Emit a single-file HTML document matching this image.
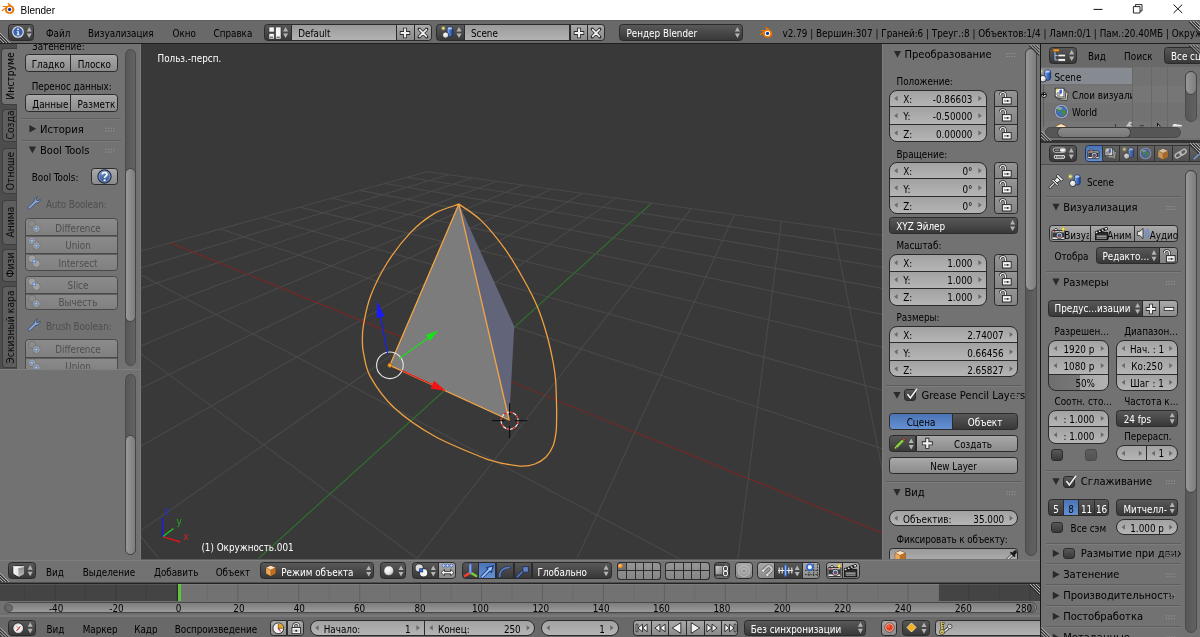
<!DOCTYPE html>
<html lang="ru"><head><meta charset="utf-8"><title>Blender</title>
<style>
html,body{margin:0;padding:0}
body{width:1200px;height:637px;position:relative;overflow:hidden;background:#727272;will-change:transform;
 font-family:"DejaVu Sans Condensed","DejaVu Sans","Liberation Sans",sans-serif;font-stretch:condensed;font-size:9.8px;color:#000}
.a{position:absolute;box-sizing:border-box}
.t{position:absolute;white-space:nowrap;height:14px;line-height:14px}
.w{border:1px solid #2b2b2b;border-radius:3.5px}
.tool{background:linear-gradient(#a9a9a9,#8b8b8b)}
.num{background:linear-gradient(#a2a2a2,#b5b5b5)}
.menu{background:linear-gradient(#585858,#383838);color:#fff}
.radio{background:linear-gradient(#575757,#383838);color:#fff}
.sel{background:linear-gradient(#4a74b6,#6590d2);color:#fff}
.txtf{background:linear-gradient(#9a9a9a,#b3b3b3)}
.dis{opacity:.5}
.c{text-align:center}
.wh{color:#fff}
.hd{font-size:11.1px;margin-top:.3px}
svg{position:absolute;overflow:visible}
</style></head>
<body>
<!-- viewport -->
<div class="a " style="left:141px;top:44px;width:741px;height:514.5px;background:#393939"></div><svg class="a" style="left:0;top:0" width="1200" height="637"><defs><clipPath id="vp"><rect x="141" y="44" width="741" height="514.5"/></clipPath></defs><g clip-path="url(#vp)"><line x1="-1207.0" y1="624.8" x2="427.1" y2="171.7" stroke="#494949" stroke-width="1.1"/><line x1="-1207.0" y1="624.8" x2="-9213.0" y2="5083.0" stroke="#494949" stroke-width="1.1"/><line x1="-1409.1" y1="737.4" x2="448.7" y2="174.7" stroke="#494949" stroke-width="1.1"/><line x1="-776.3" y1="505.4" x2="-6630.6" y2="5052.9" stroke="#494949" stroke-width="1.1"/><line x1="-1716.4" y1="908.5" x2="471.8" y2="178.0" stroke="#494949" stroke-width="1.1"/><line x1="-497.7" y1="428.2" x2="-4048.2" y2="5022.8" stroke="#494949" stroke-width="1.1"/><line x1="-2240.1" y1="1200.1" x2="496.5" y2="181.4" stroke="#494949" stroke-width="1.1"/><line x1="-302.7" y1="374.1" x2="-1465.8" y2="4992.7" stroke="#494949" stroke-width="1.1"/><line x1="-3332.5" y1="1808.4" x2="523.0" y2="185.1" stroke="#494949" stroke-width="1.1"/><line x1="-158.6" y1="334.2" x2="1116.7" y2="4962.6" stroke="#494949" stroke-width="1.1"/><line x1="-7022.3" y1="3863.1" x2="551.5" y2="189.1" stroke="#494949" stroke-width="1.1"/><line x1="-47.8" y1="303.4" x2="3699.1" y2="4932.4" stroke="#494949" stroke-width="1.1"/><line x1="-7926.0" y1="5068.0" x2="582.3" y2="193.4" stroke="#494949" stroke-width="1.1"/><line x1="40.0" y1="279.1" x2="6281.5" y2="4902.3" stroke="#494949" stroke-width="1.1"/><line x1="-6307.0" y1="5049.1" x2="615.6" y2="198.1" stroke="#494949" stroke-width="1.1"/><line x1="111.4" y1="259.3" x2="5518.2" y2="3108.9" stroke="#494949" stroke-width="1.1"/><line x1="-4688.0" y1="5030.2" x2="651.7" y2="203.1" stroke="#2d742d" stroke-width="1.1"/><line x1="170.6" y1="242.9" x2="2626.0" y2="1244.4" stroke="#7a2626" stroke-width="1.1"/><line x1="-3068.9" y1="5011.4" x2="691.1" y2="208.6" stroke="#494949" stroke-width="1.1"/><line x1="220.4" y1="229.1" x2="1932.4" y2="797.3" stroke="#494949" stroke-width="1.1"/><line x1="-1449.9" y1="4992.5" x2="734.2" y2="214.7" stroke="#494949" stroke-width="1.1"/><line x1="262.9" y1="217.3" x2="1620.9" y2="596.4" stroke="#494949" stroke-width="1.1"/><line x1="169.1" y1="4973.6" x2="781.4" y2="221.3" stroke="#494949" stroke-width="1.1"/><line x1="299.6" y1="207.1" x2="1443.9" y2="482.3" stroke="#494949" stroke-width="1.1"/><line x1="1788.2" y1="4954.7" x2="833.6" y2="228.6" stroke="#494949" stroke-width="1.1"/><line x1="331.6" y1="198.2" x2="1329.7" y2="408.8" stroke="#494949" stroke-width="1.1"/><line x1="3407.2" y1="4935.8" x2="891.5" y2="236.6" stroke="#494949" stroke-width="1.1"/><line x1="359.8" y1="190.4" x2="1250.0" y2="357.4" stroke="#494949" stroke-width="1.1"/><line x1="5026.3" y1="4917.0" x2="956.0" y2="245.7" stroke="#494949" stroke-width="1.1"/><line x1="384.8" y1="183.5" x2="1191.2" y2="319.4" stroke="#494949" stroke-width="1.1"/><line x1="6645.3" y1="4898.1" x2="1028.4" y2="255.8" stroke="#494949" stroke-width="1.1"/><line x1="407.1" y1="177.3" x2="1146.0" y2="290.3" stroke="#494949" stroke-width="1.1"/><line x1="8264.3" y1="4879.2" x2="1110.2" y2="267.2" stroke="#494949" stroke-width="1.1"/><line x1="427.1" y1="171.7" x2="1110.2" y2="267.2" stroke="#494949" stroke-width="1.1"/><polygon points="458.9,204.1 389.9,365.3 509.1,420" fill="#7c7c7c"/><polygon points="458.9,204.1 514.3,326.6 509.3,417 509.1,420" fill="#62647a"/><path d="M458.9 204.1 C454.8 205.7 442.2 208.9 434.2 213.6 C426.2 218.3 418.5 224.2 410.7 232.4 C402.9 240.6 393.8 252.4 387.1 263.0 C380.4 273.6 374.5 285.8 370.6 296.0 C366.7 306.2 365.0 316.9 363.6 324.2 C362.2 331.5 362.4 335.1 362.4 340.0 C362.4 344.9 362.2 347.4 363.6 353.6 C365.0 359.8 365.5 368.1 370.6 377.1 C375.7 386.1 383.6 397.9 394.2 407.7 C404.8 417.5 419.9 427.9 434.2 436.0 C448.5 444.1 470.3 452.4 480.0 456.5 C489.7 460.6 488.2 459.5 492.6 460.8 C497.1 462.1 501.7 463.3 506.7 464.2 C511.7 465.1 517.7 466.2 522.4 466.2 C527.1 466.2 531.1 465.5 535.0 464.0 C538.9 462.5 543.0 460.0 546.0 457.0 C549.0 454.0 551.3 450.2 553.0 446.0 C554.7 441.8 555.5 436.3 556.1 431.8 C556.7 427.3 556.5 423.9 556.6 419.2 C556.7 414.5 556.7 410.0 556.5 403.5 C556.3 397.0 556.2 386.9 555.6 380.0 C555.0 373.1 554.5 369.2 553.1 362.0 C551.7 354.8 549.8 345.5 547.3 336.5 C544.8 327.5 541.7 317.3 537.8 307.8 C533.9 298.3 529.2 289.3 523.7 279.5 C518.2 269.7 512.0 258.7 504.9 248.9 C497.8 239.1 489.0 228.1 481.3 220.6 C473.6 213.1 462.6 206.8 458.9 204.1" fill="none" stroke="#efa040" stroke-width="1.3"/><path d="M389.9 365.3 L458.9 204.1 L509.1 420 Z" fill="none" stroke="#f2a648" stroke-width="1.3" stroke-linejoin="round"/><circle cx="389.9" cy="365.3" r="13.3" fill="none" stroke="#e6e6e6" stroke-width="1.1"/><line x1="387.5" y1="353.3" x2="380.6" y2="317.2" stroke="#1a1aff" stroke-width="1.1"/><polygon points="377.3,301.5 384.5,316.4 376.7,318.0" fill="#1a1aff"/><line x1="399.2" y1="358.8" x2="427.8" y2="338" stroke="#19e019" stroke-width="1.1"/><polygon points="438.5,330.2 429.9,340.9 425.7,335.1" fill="#19e019"/><line x1="401.7" y1="370.6" x2="432.3" y2="384.6" stroke="#f01414" stroke-width="1.1"/><polygon points="446.0,391.0 430.5,388.4 434.1,380.8" fill="#f01414"/><circle cx="389.9" cy="365.3" r="2.2" fill="#f0a030" stroke="#7a4a10" stroke-width=".6"/><circle cx="509.6" cy="420.7" r="8.6" fill="none" stroke="#f2f2f2" stroke-width="1.2"/><circle cx="509.6" cy="420.7" r="8.6" fill="none" stroke="#d01818" stroke-width="1.2" stroke-dasharray="3.4 3.4"/><path d="M492.1 420.7H504.6 M515.1 420.7H527.1 M509.6 403.2V415.2 M509.6 426.2V438.2" stroke="#0a0a0a" stroke-width="1"/><line x1="162.5" y1="536.7" x2="180.4" y2="542" stroke="#e01616" stroke-width="1.4"/><line x1="162.5" y1="536.7" x2="173.5" y2="528.5" stroke="#1cc81c" stroke-width="1.4"/><line x1="162.5" y1="536.7" x2="162.5" y2="517.8" stroke="#1a1af0" stroke-width="1.4"/></g></svg><div class="t" style="left:183.4px;top:529.5px;color:#cc2424;font-size:10px">x</div><div class="t" style="left:176.4px;top:514.5px;color:#22aa22;font-size:10px">y</div><div class="t" style="left:164.3px;top:504.8px;color:#2828e8;font-size:10px">z</div><div class="t wh" style="left:157.5px;top:52.4px;">Польз.-персп.</div><div class="t wh" style="left:201.4px;top:541px;">(1) Окружность.001</div>
<!-- toolshelf -->
<div class="a " style="left:0px;top:44px;width:140px;height:325px;background:#727272;overflow:hidden"></div><div class="a " style="left:0px;top:44px;width:16.6px;height:325px;background:#4d4d4d"></div><div class="a " style="left:16px;top:44px;width:1px;height:325px;background:#444"></div><div class="a " style="left:1.2px;top:47.5px;width:15.4px;height:57px;background:#727272;border:1px solid #3e3e3e;border-right:0;border-radius:4px 0 0 4px;overflow:hidden"></div><div class="a" style="left:1.2px;top:47.5px;width:15.400000000000002px;height:57.0px;overflow:hidden"><div class="t" style="left:8.6px;top:28.5px;transform:translate(-50%,-50%) rotate(-90deg);color:#000;font-size:10.3px">Инструме</div></div><div class="a " style="left:2.2px;top:108.5px;width:14.4px;height:33.5px;background:#5e5e5e;border:1px solid #3e3e3e;border-right:1px solid #444;border-radius:4px 0 0 4px;overflow:hidden"></div><div class="a" style="left:2.2px;top:108.5px;width:14.400000000000002px;height:33.5px;overflow:hidden"><div class="t" style="left:8.1px;top:16.75px;transform:translate(-50%,-50%) rotate(-90deg);color:#0c0c0c;font-size:10.3px">Созда</div></div><div class="a " style="left:2.2px;top:148px;width:14.4px;height:46px;background:#5e5e5e;border:1px solid #3e3e3e;border-right:1px solid #444;border-radius:4px 0 0 4px;overflow:hidden"></div><div class="a" style="left:2.2px;top:148px;width:14.400000000000002px;height:46px;overflow:hidden"><div class="t" style="left:8.1px;top:23px;transform:translate(-50%,-50%) rotate(-90deg);color:#0c0c0c;font-size:10.3px">Отноше</div></div><div class="a " style="left:2.2px;top:200px;width:14.4px;height:44.5px;background:#5e5e5e;border:1px solid #3e3e3e;border-right:1px solid #444;border-radius:4px 0 0 4px;overflow:hidden"></div><div class="a" style="left:2.2px;top:200px;width:14.400000000000002px;height:44.5px;overflow:hidden"><div class="t" style="left:8.1px;top:22.25px;transform:translate(-50%,-50%) rotate(-90deg);color:#0c0c0c;font-size:10.3px">Анима</div></div><div class="a " style="left:2.2px;top:248.5px;width:14.4px;height:33.5px;background:#5e5e5e;border:1px solid #3e3e3e;border-right:1px solid #444;border-radius:4px 0 0 4px;overflow:hidden"></div><div class="a" style="left:2.2px;top:248.5px;width:14.400000000000002px;height:33.5px;overflow:hidden"><div class="t" style="left:8.1px;top:16.75px;transform:translate(-50%,-50%) rotate(-90deg);color:#0c0c0c;font-size:10.3px">Физи</div></div><div class="a " style="left:2.2px;top:285.5px;width:14.4px;height:82.5px;background:#5e5e5e;border:1px solid #3e3e3e;border-right:1px solid #444;border-radius:4px 0 0 4px;overflow:hidden"></div><div class="a" style="left:2.2px;top:285.5px;width:14.400000000000002px;height:82.5px;overflow:hidden"><div class="t" style="left:8.1px;top:41.25px;transform:translate(-50%,-50%) rotate(-90deg);color:#0c0c0c;font-size:10.3px">Эскизный кара</div></div><div class="a" style="left:18px;top:44px;width:105px;height:12px;overflow:hidden"><div class="t " style="left:14px;top:-4.4px;">Затенение:</div></div><div class="a w tool" style="left:25px;top:54px;width:47px;height:18px;border-radius:3.5px 0 0 3.5px;"></div><div class="t c " style="left:25px;width:46.5px;top:57.7px;">Гладко</div><div class="a w tool" style="left:70px;top:54px;width:48px;height:18px;border-radius:0 3.5px 3.5px 0;"></div><div class="t c " style="left:70.5px;width:47.5px;top:57.7px;">Плоско</div><div class="t " style="left:31.7px;top:79.9px;">Перенос данных:</div><div class="a w tool" style="left:25px;top:94px;width:47px;height:18px;border-radius:3.5px 0 0 3.5px;"></div><div class="a" style="left:26px;top:94px;width:44px;height:17.7px;overflow:hidden"><div class="t " style="left:6.3px;top:3.55px;">Данные</div></div><div class="a w tool" style="left:70px;top:94px;width:48px;height:18px;border-radius:0 3.5px 3.5px 0;"></div><div class="a" style="left:70.5px;top:94px;width:44.6px;height:17.7px;overflow:hidden"><div class="t " style="left:7px;top:3.55px;">Разметка</div></div><div class="a " style="left:22px;top:118px;width:98.5px;height:1px;background:#5e5e5e"></div><div class="a " style="left:22px;top:119px;width:98.5px;height:1px;background:#7c7c7c"></div><svg class="a" style="left:0;top:0" width="1200" height="637"><polygon points="29.4,125.10000000000001 29.4,132.5 36.199999999999996,128.8" fill="#2a2a2a"/></svg><div class="t hd" style="left:40px;top:122.4px;">История</div><svg class="a" style="left:0;top:0" width="1200" height="637"><rect x="105.5" y="127.8" width="1.3" height="1.3" fill="#9a9a9a"/><rect x="106.1" y="128.5" width="1" height="1" fill="#555" opacity=".55"/><rect x="105.5" y="130.6" width="1.3" height="1.3" fill="#9a9a9a"/><rect x="106.1" y="131.3" width="1" height="1" fill="#555" opacity=".55"/><rect x="108.1" y="127.8" width="1.3" height="1.3" fill="#9a9a9a"/><rect x="108.7" y="128.5" width="1" height="1" fill="#555" opacity=".55"/><rect x="108.1" y="130.6" width="1.3" height="1.3" fill="#9a9a9a"/><rect x="108.7" y="131.3" width="1" height="1" fill="#555" opacity=".55"/><rect x="110.7" y="127.8" width="1.3" height="1.3" fill="#9a9a9a"/><rect x="111.3" y="128.5" width="1" height="1" fill="#555" opacity=".55"/><rect x="110.7" y="130.6" width="1.3" height="1.3" fill="#9a9a9a"/><rect x="111.3" y="131.3" width="1" height="1" fill="#555" opacity=".55"/><rect x="113.3" y="127.8" width="1.3" height="1.3" fill="#9a9a9a"/><rect x="113.9" y="128.5" width="1" height="1" fill="#555" opacity=".55"/><rect x="113.3" y="130.6" width="1.3" height="1.3" fill="#9a9a9a"/><rect x="113.9" y="131.3" width="1" height="1" fill="#555" opacity=".55"/></svg><div class="a " style="left:22px;top:139.5px;width:98.5px;height:1px;background:#5e5e5e"></div><div class="a " style="left:22px;top:140.5px;width:98.5px;height:1px;background:#7c7c7c"></div><svg class="a" style="left:0;top:0" width="1200" height="637"><polygon points="28.799999999999997,146.60000000000002 36.0,146.60000000000002 32.4,153.4" fill="#2a2a2a"/></svg><div class="t hd" style="left:40px;top:143.4px;">Bool Tools</div><svg class="a" style="left:0;top:0" width="1200" height="637"><rect x="105.5" y="148.8" width="1.3" height="1.3" fill="#9a9a9a"/><rect x="106.1" y="149.5" width="1" height="1" fill="#555" opacity=".55"/><rect x="105.5" y="151.6" width="1.3" height="1.3" fill="#9a9a9a"/><rect x="106.1" y="152.3" width="1" height="1" fill="#555" opacity=".55"/><rect x="108.1" y="148.8" width="1.3" height="1.3" fill="#9a9a9a"/><rect x="108.7" y="149.5" width="1" height="1" fill="#555" opacity=".55"/><rect x="108.1" y="151.6" width="1.3" height="1.3" fill="#9a9a9a"/><rect x="108.7" y="152.3" width="1" height="1" fill="#555" opacity=".55"/><rect x="110.7" y="148.8" width="1.3" height="1.3" fill="#9a9a9a"/><rect x="111.3" y="149.5" width="1" height="1" fill="#555" opacity=".55"/><rect x="110.7" y="151.6" width="1.3" height="1.3" fill="#9a9a9a"/><rect x="111.3" y="152.3" width="1" height="1" fill="#555" opacity=".55"/><rect x="113.3" y="148.8" width="1.3" height="1.3" fill="#9a9a9a"/><rect x="113.9" y="149.5" width="1" height="1" fill="#555" opacity=".55"/><rect x="113.3" y="151.6" width="1.3" height="1.3" fill="#9a9a9a"/><rect x="113.9" y="152.3" width="1" height="1" fill="#555" opacity=".55"/></svg><div class="t " style="left:31.8px;top:170.9px;">Bool Tools:</div><div class="a w tool" style="left:91px;top:168px;width:27px;height:17px;border-radius:3.5px;"></div><svg class="a" style="left:97.2px;top:169px" width="15" height="15" viewBox="0 0 15 15"><defs><linearGradient id="hlp" x1="0" y1="0" x2="0" y2="1"><stop offset="0" stop-color="#6f8fc6"/><stop offset="1" stop-color="#37578f"/></linearGradient></defs><circle cx="7.5" cy="7.5" r="6.6" fill="url(#hlp)" stroke="#1c2842" stroke-width="1.1"/><circle cx="7.5" cy="7.5" r="5.5" fill="none" stroke="#a9bfe4" stroke-width=".6" opacity=".8"/><path d="M5.3 5.6 C5.3 2.8 9.9 2.8 9.9 5.5 C9.9 7.2 7.6 7.2 7.6 9" stroke="#fff" stroke-width="1.7" fill="none"/><circle cx="7.6" cy="11.3" r="1.05" fill="#fff"/></svg><svg class="a" style="left:27px;top:196px;opacity:1" width="14" height="14" viewBox="0 0 14 14"><path d="M1.3 11.2 L7.6 4.9 C7.2 3.3 7.9 1.8 9.5 1 L10.6 0.8 L8.9 2.9 L9.6 4.4 L11.2 5 L13 3.1 C13.3 4.6 12.6 6.3 11 6.9 C10.2 7.2 9.6 7.1 9 6.9 L2.8 12.8 C1.8 13.6 0.4 12.2 1.3 11.2Z" fill="#8fb0de" stroke="#33466a" stroke-width=".8"/></svg><div class="t " style="left:45.9px;top:198.1px;color:#4e4e4e;letter-spacing:-.09px">Auto Boolean:</div><div class="a w" style="left:25px;top:218px;width:93px;height:18px;border-radius:3.5px 3.5px 0 0;background:linear-gradient(#8b8b8b,#808080);border-color:#4a4a4a"></div><svg class="a" style="left:26.5px;top:219.3px;opacity:0.85" width="15" height="15" viewBox="0 0 15 15"><circle cx="5" cy="4.8" r="3.8" fill="#8c8c8c" stroke="#6c6c6c" stroke-width=".7"/><circle cx="9.4" cy="9.6" r="3.8" fill="#a8a8a8" stroke="#686868" stroke-width=".7"/><rect x="8" y="8.3" width="2.8" height="2.6" fill="#d4def0" stroke="#5b86cc" stroke-width=".9"/></svg><div class="t c" style="left:41px;width:74px;top:221.5px;color:#4e4e4e">Difference</div><div class="a w" style="left:25px;top:235px;width:93px;height:19px;border-radius:0;background:linear-gradient(#8b8b8b,#808080);border-color:#4a4a4a"></div><div class="a " style="left:26px;top:236px;width:91px;height:1px;background:rgba(60,60,60,.55)"></div><svg class="a" style="left:26.5px;top:236.3px;opacity:0.85" width="15" height="15" viewBox="0 0 15 15"><circle cx="5" cy="4.8" r="3.8" fill="#a6a6a6" stroke="#6c6c6c" stroke-width=".7"/><circle cx="9.4" cy="9.6" r="3.8" fill="#a8a8a8" stroke="#686868" stroke-width=".7"/><rect x="3.6" y="3.5" width="2.6" height="2.5" fill="#d4def0" stroke="#5b86cc" stroke-width=".9"/><rect x="8" y="8.3" width="2.8" height="2.6" fill="#d4def0" stroke="#5b86cc" stroke-width=".9"/></svg><div class="t c" style="left:41px;width:74px;top:238.75px;color:#4e4e4e">Union</div><div class="a w" style="left:25px;top:253px;width:93px;height:18px;border-radius:0 0 3.5px 3.5px;background:linear-gradient(#8b8b8b,#808080);border-color:#4a4a4a"></div><div class="a " style="left:26px;top:254px;width:91px;height:1px;background:rgba(60,60,60,.55)"></div><svg class="a" style="left:26.5px;top:253.8px;opacity:0.85" width="15" height="15" viewBox="0 0 15 15"><circle cx="5" cy="4.8" r="3.8" fill="#a6a6a6" stroke="#6c6c6c" stroke-width=".7"/><circle cx="9.4" cy="9.6" r="3.8" fill="#a8a8a8" stroke="#686868" stroke-width=".7"/><rect x="5.8" y="6" width="2.7" height="2.6" fill="#d4def0" stroke="#5b86cc" stroke-width=".9"/></svg><div class="t c" style="left:41px;width:74px;top:256.6px;color:#4e4e4e">Intersect</div><div class="a w" style="left:25px;top:276px;width:93px;height:18px;border-radius:3.5px 3.5px 0 0;background:linear-gradient(#8b8b8b,#808080);border-color:#4a4a4a"></div><svg class="a" style="left:26.5px;top:276.7px;opacity:0.85" width="15" height="15" viewBox="0 0 15 15"><circle cx="5" cy="4.8" r="3.8" fill="#a6a6a6" stroke="#6c6c6c" stroke-width=".7"/><circle cx="9.4" cy="9.6" r="3.8" fill="#a8a8a8" stroke="#686868" stroke-width=".7"/><rect x="5.8" y="6" width="2.7" height="2.6" fill="#d4def0" stroke="#5b86cc" stroke-width=".9"/></svg><div class="t c" style="left:41px;width:74px;top:279.05px;color:#4e4e4e">Slice</div><div class="a w" style="left:25px;top:293px;width:93px;height:17px;border-radius:0 0 3.5px 3.5px;background:linear-gradient(#8b8b8b,#808080);border-color:#4a4a4a"></div><div class="a " style="left:26px;top:294px;width:91px;height:1px;background:rgba(60,60,60,.55)"></div><svg class="a" style="left:26.5px;top:294px;opacity:0.85" width="15" height="15" viewBox="0 0 15 15"><circle cx="5" cy="4.8" r="3.8" fill="#8c8c8c" stroke="#6c6c6c" stroke-width=".7"/><circle cx="9.4" cy="9.6" r="3.8" fill="#a8a8a8" stroke="#686868" stroke-width=".7"/><rect x="8" y="8.3" width="2.8" height="2.6" fill="#d4def0" stroke="#5b86cc" stroke-width=".9"/></svg><div class="t c" style="left:41px;width:74px;top:296.35px;color:#4e4e4e">Вычесть</div><svg class="a" style="left:27px;top:318px;opacity:1" width="14" height="14" viewBox="0 0 14 14"><path d="M1.3 11.2 L7.6 4.9 C7.2 3.3 7.9 1.8 9.5 1 L10.6 0.8 L8.9 2.9 L9.6 4.4 L11.2 5 L13 3.1 C13.3 4.6 12.6 6.3 11 6.9 C10.2 7.2 9.6 7.1 9 6.9 L2.8 12.8 C1.8 13.6 0.4 12.2 1.3 11.2Z" fill="#8fb0de" stroke="#33466a" stroke-width=".8"/></svg><div class="t " style="left:45.9px;top:319.6px;color:#4e4e4e;letter-spacing:-.09px">Brush Boolean:</div><div class="a" style="left:0;top:339px;width:125px;height:29.5px;overflow:hidden"><div class="a" style="left:0;top:-339px"><div class="a w" style="left:25px;top:339px;width:93px;height:19px;border-radius:3.5px 3.5px 0 0;background:linear-gradient(#8b8b8b,#808080);border-color:#4a4a4a"></div><svg class="a" style="left:26.5px;top:340.4px;opacity:0.85" width="15" height="15" viewBox="0 0 15 15"><circle cx="5" cy="4.8" r="3.8" fill="#8c8c8c" stroke="#6c6c6c" stroke-width=".7"/><circle cx="9.4" cy="9.6" r="3.8" fill="#a8a8a8" stroke="#686868" stroke-width=".7"/><rect x="8" y="8.3" width="2.8" height="2.6" fill="#d4def0" stroke="#5b86cc" stroke-width=".9"/></svg><div class="t c" style="left:41px;width:74px;top:342.8px;color:#4e4e4e">Difference</div><div class="a w" style="left:25px;top:357px;width:93px;height:17px;border-radius:0;background:linear-gradient(#8b8b8b,#808080);border-color:#4a4a4a"></div><div class="a " style="left:26px;top:358px;width:91px;height:1px;background:rgba(60,60,60,.55)"></div><svg class="a" style="left:26.5px;top:357.8px;opacity:0.85" width="15" height="15" viewBox="0 0 15 15"><circle cx="5" cy="4.8" r="3.8" fill="#a6a6a6" stroke="#6c6c6c" stroke-width=".7"/><circle cx="9.4" cy="9.6" r="3.8" fill="#a8a8a8" stroke="#686868" stroke-width=".7"/><rect x="3.6" y="3.5" width="2.6" height="2.5" fill="#d4def0" stroke="#5b86cc" stroke-width=".9"/><rect x="8" y="8.3" width="2.8" height="2.6" fill="#d4def0" stroke="#5b86cc" stroke-width=".9"/></svg><div class="t c" style="left:41px;width:74px;top:359.8px;color:#4e4e4e">Union</div></div></div><div class="a " style="left:124.8px;top:48.5px;width:10.8px;height:317px;background:linear-gradient(90deg,#575757,#626262);border:1px solid #4c4c4c;border-radius:6px"></div><div class="a " style="left:124.8px;top:168px;width:10.8px;height:153.6px;background:linear-gradient(90deg,#989898,#7d7d7d);border:1px solid #444;border-radius:6px"></div><div class="a " style="left:0px;top:369px;width:140px;height:1px;background:#808080"></div><div class="a " style="left:0px;top:369.5px;width:140px;height:189px;background:#727272"></div><div class="a " style="left:124.8px;top:374px;width:10.8px;height:181px;background:linear-gradient(90deg,#575757,#626262);border:1px solid #4c4c4c;border-radius:6px"></div><div class="a " style="left:124.8px;top:434.6px;width:10.8px;height:120.4px;background:linear-gradient(90deg,#989898,#7d7d7d);border:1px solid #444;border-radius:6px"></div><div class="a " style="left:139.6px;top:44px;width:1.2px;height:515px;background:#7c7c7c"></div>
<!-- npanel -->
<div class="a " style="left:882px;top:44px;width:158.5px;height:514.5px;background:#727272"></div><div class="a " style="left:882px;top:44px;width:1px;height:514.5px;background:#7e7e7e"></div><svg class="a" style="left:0;top:0" width="1200" height="637"><polygon points="893.9,51.0 901.1,51.0 897.5,57.800000000000004" fill="#2a2a2a"/></svg><div class="t hd" style="left:904.4px;top:47.8px;">Преобразование</div><svg class="a" style="left:0;top:0" width="1200" height="637"><rect x="1006.6" y="53.3" width="1.3" height="1.3" fill="#9a9a9a"/><rect x="1007.2" y="54.0" width="1" height="1" fill="#555" opacity=".55"/><rect x="1006.6" y="56.1" width="1.3" height="1.3" fill="#9a9a9a"/><rect x="1007.2" y="56.8" width="1" height="1" fill="#555" opacity=".55"/><rect x="1009.2" y="53.3" width="1.3" height="1.3" fill="#9a9a9a"/><rect x="1009.8" y="54.0" width="1" height="1" fill="#555" opacity=".55"/><rect x="1009.2" y="56.1" width="1.3" height="1.3" fill="#9a9a9a"/><rect x="1009.8" y="56.8" width="1" height="1" fill="#555" opacity=".55"/><rect x="1011.8" y="53.3" width="1.3" height="1.3" fill="#9a9a9a"/><rect x="1012.4" y="54.0" width="1" height="1" fill="#555" opacity=".55"/><rect x="1011.8" y="56.1" width="1.3" height="1.3" fill="#9a9a9a"/><rect x="1012.4" y="56.8" width="1" height="1" fill="#555" opacity=".55"/><rect x="1014.4" y="53.3" width="1.3" height="1.3" fill="#9a9a9a"/><rect x="1015.0" y="54.0" width="1" height="1" fill="#555" opacity=".55"/><rect x="1014.4" y="56.1" width="1.3" height="1.3" fill="#9a9a9a"/><rect x="1015.0" y="56.8" width="1" height="1" fill="#555" opacity=".55"/></svg><div class="t " style="left:896.5px;top:75.4px;">Положение:</div><div class="a w num" style="left:889px;top:90px;width:98px;height:17px;border-radius:8px 8px 0 0;"></div><svg class="a" style="left:0;top:0" width="1200" height="637"><polygon points="897.6,95.85000000000001 897.6,101.05 894.2,98.45" fill="#6a6a6a"/><polygon points="978.4,95.85000000000001 978.4,101.05 981.8,98.45" fill="#6a6a6a"/></svg><div class="t" style="left:903.3px;top:93.15px;">X:</div><div class="t" style="right:227.6px;top:93.15px;">-0.86603</div><div class="a w" style="left:994px;top:90px;width:24px;height:17px;border-radius:3.5px 3.5px 0 0;background:linear-gradient(#959595,#848484)"></div><svg class="a" style="left:998.1px;top:91.3px" width="14" height="14" viewBox="0 0 14 14"><path d="M2.2 4.2 C2.2 0.6 7.4 0.6 7.4 4.2 V7.4" fill="none" stroke="#2a2a2a" stroke-width="2.6"/><path d="M2.2 4.2 C2.2 0.6 7.4 0.6 7.4 4.2 V7.4" fill="none" stroke="#f2f2f2" stroke-width="1.2"/><rect x="4.4" y="6.6" width="8.8" height="6.4" fill="#f4f4f4" stroke="#2a2a2a" stroke-width="1"/><rect x="6" y="9" width="5.4" height="1.8" fill="#9a9a9a"/><rect x="9" y="9" width="1.2" height="1.8" fill="#333"/></svg><div class="a w num" style="left:889px;top:106px;width:98px;height:19px;border-radius:0;"></div><svg class="a" style="left:0;top:0" width="1200" height="637"><polygon points="897.6,113.10000000000001 897.6,118.3 894.2,115.7" fill="#6a6a6a"/><polygon points="978.4,113.10000000000001 978.4,118.3 981.8,115.7" fill="#6a6a6a"/></svg><div class="t" style="left:903.3px;top:110.4px;">Y:</div><div class="t" style="right:227.6px;top:110.4px;">-0.50000</div><div class="a w" style="left:994px;top:106px;width:24px;height:19px;border-radius:0;background:linear-gradient(#959595,#848484)"></div><svg class="a" style="left:998.1px;top:107.8px" width="14" height="14" viewBox="0 0 14 14"><path d="M2.2 4.2 C2.2 0.6 7.4 0.6 7.4 4.2 V7.4" fill="none" stroke="#2a2a2a" stroke-width="2.6"/><path d="M2.2 4.2 C2.2 0.6 7.4 0.6 7.4 4.2 V7.4" fill="none" stroke="#f2f2f2" stroke-width="1.2"/><rect x="4.4" y="6.6" width="8.8" height="6.4" fill="#f4f4f4" stroke="#2a2a2a" stroke-width="1"/><rect x="6" y="9" width="5.4" height="1.8" fill="#9a9a9a"/><rect x="9" y="9" width="1.2" height="1.8" fill="#333"/></svg><div class="a w num" style="left:889px;top:124px;width:98px;height:18px;border-radius:0 0 8px 8px;"></div><svg class="a" style="left:0;top:0" width="1200" height="637"><polygon points="897.6,130.3 897.6,135.5 894.2,132.9" fill="#6a6a6a"/><polygon points="978.4,130.3 978.4,135.5 981.8,132.9" fill="#6a6a6a"/></svg><div class="t" style="left:903.3px;top:127.6px;">Z:</div><div class="t" style="right:227.6px;top:127.6px;">0.00000</div><div class="a w" style="left:994px;top:124px;width:24px;height:18px;border-radius:0 0 3.5px 3.5px;background:linear-gradient(#959595,#848484)"></div><svg class="a" style="left:998.1px;top:125.8px" width="14" height="14" viewBox="0 0 14 14"><path d="M2.2 4.2 C2.2 0.6 7.4 0.6 7.4 4.2 V7.4" fill="none" stroke="#2a2a2a" stroke-width="2.6"/><path d="M2.2 4.2 C2.2 0.6 7.4 0.6 7.4 4.2 V7.4" fill="none" stroke="#f2f2f2" stroke-width="1.2"/><rect x="4.4" y="6.6" width="8.8" height="6.4" fill="#f4f4f4" stroke="#2a2a2a" stroke-width="1"/><rect x="6" y="9" width="5.4" height="1.8" fill="#9a9a9a"/><rect x="9" y="9" width="1.2" height="1.8" fill="#333"/></svg><div class="t " style="left:896.5px;top:147.6px;">Вращение:</div><div class="a w num" style="left:889px;top:162px;width:98px;height:17px;border-radius:8px 8px 0 0;"></div><svg class="a" style="left:0;top:0" width="1200" height="637"><polygon points="897.6,168.1 897.6,173.29999999999998 894.2,170.7" fill="#6a6a6a"/><polygon points="978.4,168.1 978.4,173.29999999999998 981.8,170.7" fill="#6a6a6a"/></svg><div class="t" style="left:903.3px;top:165.4px;">X:</div><div class="t" style="right:227.6px;top:165.4px;">0°</div><div class="a w" style="left:994px;top:162px;width:24px;height:17px;border-radius:3.5px 3.5px 0 0;background:linear-gradient(#959595,#848484)"></div><svg class="a" style="left:998.1px;top:163.6px" width="14" height="14" viewBox="0 0 14 14"><path d="M2.2 4.2 C2.2 0.6 7.4 0.6 7.4 4.2 V7.4" fill="none" stroke="#2a2a2a" stroke-width="2.6"/><path d="M2.2 4.2 C2.2 0.6 7.4 0.6 7.4 4.2 V7.4" fill="none" stroke="#f2f2f2" stroke-width="1.2"/><rect x="4.4" y="6.6" width="8.8" height="6.4" fill="#f4f4f4" stroke="#2a2a2a" stroke-width="1"/><rect x="6" y="9" width="5.4" height="1.8" fill="#9a9a9a"/><rect x="9" y="9" width="1.2" height="1.8" fill="#333"/></svg><div class="a w num" style="left:889px;top:178px;width:98px;height:19px;border-radius:0;"></div><svg class="a" style="left:0;top:0" width="1200" height="637"><polygon points="897.6,185.20000000000002 897.6,190.4 894.2,187.8" fill="#6a6a6a"/><polygon points="978.4,185.20000000000002 978.4,190.4 981.8,187.8" fill="#6a6a6a"/></svg><div class="t" style="left:903.3px;top:182.5px;">Y:</div><div class="t" style="right:227.6px;top:182.5px;">0°</div><div class="a w" style="left:994px;top:178px;width:24px;height:19px;border-radius:0;background:linear-gradient(#959595,#848484)"></div><svg class="a" style="left:998.1px;top:180.0px" width="14" height="14" viewBox="0 0 14 14"><path d="M2.2 4.2 C2.2 0.6 7.4 0.6 7.4 4.2 V7.4" fill="none" stroke="#2a2a2a" stroke-width="2.6"/><path d="M2.2 4.2 C2.2 0.6 7.4 0.6 7.4 4.2 V7.4" fill="none" stroke="#f2f2f2" stroke-width="1.2"/><rect x="4.4" y="6.6" width="8.8" height="6.4" fill="#f4f4f4" stroke="#2a2a2a" stroke-width="1"/><rect x="6" y="9" width="5.4" height="1.8" fill="#9a9a9a"/><rect x="9" y="9" width="1.2" height="1.8" fill="#333"/></svg><div class="a w num" style="left:889px;top:196px;width:98px;height:18px;border-radius:0 0 8px 8px;"></div><svg class="a" style="left:0;top:0" width="1200" height="637"><polygon points="897.6,202.4 897.6,207.6 894.2,205.0" fill="#6a6a6a"/><polygon points="978.4,202.4 978.4,207.6 981.8,205.0" fill="#6a6a6a"/></svg><div class="t" style="left:903.3px;top:199.7px;">Z:</div><div class="t" style="right:227.6px;top:199.7px;">0°</div><div class="a w" style="left:994px;top:196px;width:24px;height:18px;border-radius:0 0 3.5px 3.5px;background:linear-gradient(#959595,#848484)"></div><svg class="a" style="left:998.1px;top:197.79999999999998px" width="14" height="14" viewBox="0 0 14 14"><path d="M2.2 4.2 C2.2 0.6 7.4 0.6 7.4 4.2 V7.4" fill="none" stroke="#2a2a2a" stroke-width="2.6"/><path d="M2.2 4.2 C2.2 0.6 7.4 0.6 7.4 4.2 V7.4" fill="none" stroke="#f2f2f2" stroke-width="1.2"/><rect x="4.4" y="6.6" width="8.8" height="6.4" fill="#f4f4f4" stroke="#2a2a2a" stroke-width="1"/><rect x="6" y="9" width="5.4" height="1.8" fill="#9a9a9a"/><rect x="9" y="9" width="1.2" height="1.8" fill="#333"/></svg><div class="a w menu" style="left:889px;top:217px;width:129px;height:17px;border-radius:3.5px;"></div><div class="t wh" style="left:896.3px;top:220.2px;">XYZ Эйлер</div><svg class="a" style="left:0;top:0" width="1200" height="637"><polygon points="1010.1,224.5 1015.1,224.5 1012.6,219.9" fill="#b4b4b4"/><polygon points="1010.1,226.5 1015.1,226.5 1012.6,231.1" fill="#b4b4b4"/></svg><div class="t " style="left:896.5px;top:239px;">Масштаб:</div><div class="a w num" style="left:889px;top:254px;width:98px;height:18px;border-radius:8px 8px 0 0;"></div><svg class="a" style="left:0;top:0" width="1200" height="637"><polygon points="897.6,260.04999999999995 897.6,265.25 894.2,262.65" fill="#6a6a6a"/><polygon points="978.4,260.04999999999995 978.4,265.25 981.8,262.65" fill="#6a6a6a"/></svg><div class="t" style="left:903.3px;top:257.35px;">X:</div><div class="t" style="right:227.6px;top:257.35px;">1.000</div><div class="a w" style="left:994px;top:254px;width:24px;height:18px;border-radius:3.5px 3.5px 0 0;background:linear-gradient(#959595,#848484)"></div><svg class="a" style="left:998.1px;top:255.29999999999998px" width="14" height="14" viewBox="0 0 14 14"><path d="M2.2 4.2 C2.2 0.6 7.4 0.6 7.4 4.2 V7.4" fill="none" stroke="#2a2a2a" stroke-width="2.6"/><path d="M2.2 4.2 C2.2 0.6 7.4 0.6 7.4 4.2 V7.4" fill="none" stroke="#f2f2f2" stroke-width="1.2"/><rect x="4.4" y="6.6" width="8.8" height="6.4" fill="#f4f4f4" stroke="#2a2a2a" stroke-width="1"/><rect x="6" y="9" width="5.4" height="1.8" fill="#9a9a9a"/><rect x="9" y="9" width="1.2" height="1.8" fill="#333"/></svg><div class="a w num" style="left:889px;top:271px;width:98px;height:18px;border-radius:0;"></div><svg class="a" style="left:0;top:0" width="1200" height="637"><polygon points="897.6,277.1 897.6,282.30000000000007 894.2,279.70000000000005" fill="#6a6a6a"/><polygon points="978.4,277.1 978.4,282.30000000000007 981.8,279.70000000000005" fill="#6a6a6a"/></svg><div class="t" style="left:903.3px;top:274.4px;">Y:</div><div class="t" style="right:227.6px;top:274.4px;">1.000</div><div class="a w" style="left:994px;top:271px;width:24px;height:18px;border-radius:0;background:linear-gradient(#959595,#848484)"></div><svg class="a" style="left:998.1px;top:272.20000000000005px" width="14" height="14" viewBox="0 0 14 14"><path d="M2.2 4.2 C2.2 0.6 7.4 0.6 7.4 4.2 V7.4" fill="none" stroke="#2a2a2a" stroke-width="2.6"/><path d="M2.2 4.2 C2.2 0.6 7.4 0.6 7.4 4.2 V7.4" fill="none" stroke="#f2f2f2" stroke-width="1.2"/><rect x="4.4" y="6.6" width="8.8" height="6.4" fill="#f4f4f4" stroke="#2a2a2a" stroke-width="1"/><rect x="6" y="9" width="5.4" height="1.8" fill="#9a9a9a"/><rect x="9" y="9" width="1.2" height="1.8" fill="#333"/></svg><div class="a w num" style="left:889px;top:288px;width:98px;height:18px;border-radius:0 0 8px 8px;"></div><svg class="a" style="left:0;top:0" width="1200" height="637"><polygon points="897.6,294.1 897.6,299.30000000000007 894.2,296.70000000000005" fill="#6a6a6a"/><polygon points="978.4,294.1 978.4,299.30000000000007 981.8,296.70000000000005" fill="#6a6a6a"/></svg><div class="t" style="left:903.3px;top:291.4px;">Z:</div><div class="t" style="right:227.6px;top:291.4px;">1.000</div><div class="a w" style="left:994px;top:288px;width:24px;height:18px;border-radius:0 0 3.5px 3.5px;background:linear-gradient(#959595,#848484)"></div><svg class="a" style="left:998.1px;top:289.40000000000003px" width="14" height="14" viewBox="0 0 14 14"><path d="M2.2 4.2 C2.2 0.6 7.4 0.6 7.4 4.2 V7.4" fill="none" stroke="#2a2a2a" stroke-width="2.6"/><path d="M2.2 4.2 C2.2 0.6 7.4 0.6 7.4 4.2 V7.4" fill="none" stroke="#f2f2f2" stroke-width="1.2"/><rect x="4.4" y="6.6" width="8.8" height="6.4" fill="#f4f4f4" stroke="#2a2a2a" stroke-width="1"/><rect x="6" y="9" width="5.4" height="1.8" fill="#9a9a9a"/><rect x="9" y="9" width="1.2" height="1.8" fill="#333"/></svg><div class="t " style="left:896.5px;top:310.6px;">Размеры:</div><div class="a w num" style="left:889px;top:326px;width:129px;height:17px;border-radius:8px 8px 0 0;"></div><svg class="a" style="left:0;top:0" width="1200" height="637"><polygon points="897.6,331.9 897.6,337.1 894.2,334.5" fill="#6a6a6a"/><polygon points="1009.6,331.9 1009.6,337.1 1013.0,334.5" fill="#6a6a6a"/></svg><div class="t" style="left:903.3px;top:329.2px;">X:</div><div class="t" style="right:196.4px;top:329.2px;">2.74007</div><div class="a w num" style="left:889px;top:342px;width:129px;height:19px;border-radius:0;"></div><svg class="a" style="left:0;top:0" width="1200" height="637"><polygon points="897.6,349.19999999999993 897.6,354.4 894.2,351.79999999999995" fill="#6a6a6a"/><polygon points="1009.6,349.19999999999993 1009.6,354.4 1013.0,351.79999999999995" fill="#6a6a6a"/></svg><div class="t" style="left:903.3px;top:346.5px;">Y:</div><div class="t" style="right:196.4px;top:346.5px;">0.66456</div><div class="a w num" style="left:889px;top:360px;width:129px;height:17px;border-radius:0 0 8px 8px;"></div><svg class="a" style="left:0;top:0" width="1200" height="637"><polygon points="897.6,366.19999999999993 897.6,371.4 894.2,368.79999999999995" fill="#6a6a6a"/><polygon points="1009.6,366.19999999999993 1009.6,371.4 1013.0,368.79999999999995" fill="#6a6a6a"/></svg><div class="t" style="left:903.3px;top:363.5px;">Z:</div><div class="t" style="right:196.4px;top:363.5px;">2.65827</div><div class="a " style="left:886px;top:384.5px;width:136px;height:1px;background:#5e5e5e"></div><div class="a " style="left:886px;top:385.5px;width:136px;height:1px;background:#7c7c7c"></div><svg class="a" style="left:0;top:0" width="1200" height="637"><polygon points="893.4,392.0 900.6,392.0 897,398.8" fill="#2a2a2a"/></svg><div class="a w menu" style="left:904px;top:389px;width:12px;height:12px;border-radius:3px;"></div><svg class="a" style="left:904.4px;top:387.2px" width="14.8" height="13.8" viewBox="0 0 14 13"><path d="M3.2 6.6 L6 10.4 L12.4 1.6" stroke="#222" stroke-width="2.6" fill="none" opacity=".5"/><path d="M3.2 6.6 L6 10.4 L12.4 1.6" stroke="#f4f4f4" stroke-width="1.5" fill="none"/></svg><div class="t hd" style="left:921.5px;top:388.6px;">Grease Pencil Layers</div><svg class="a" style="left:0;top:0" width="1200" height="637"><rect x="1009.0" y="394.1" width="1.3" height="1.3" fill="#9a9a9a"/><rect x="1009.6" y="394.8" width="1" height="1" fill="#555" opacity=".55"/><rect x="1009.0" y="396.9" width="1.3" height="1.3" fill="#9a9a9a"/><rect x="1009.6" y="397.6" width="1" height="1" fill="#555" opacity=".55"/><rect x="1011.6" y="394.1" width="1.3" height="1.3" fill="#9a9a9a"/><rect x="1012.2" y="394.8" width="1" height="1" fill="#555" opacity=".55"/><rect x="1011.6" y="396.9" width="1.3" height="1.3" fill="#9a9a9a"/><rect x="1012.2" y="397.6" width="1" height="1" fill="#555" opacity=".55"/><rect x="1014.2" y="394.1" width="1.3" height="1.3" fill="#9a9a9a"/><rect x="1014.8" y="394.8" width="1" height="1" fill="#555" opacity=".55"/><rect x="1014.2" y="396.9" width="1.3" height="1.3" fill="#9a9a9a"/><rect x="1014.8" y="397.6" width="1" height="1" fill="#555" opacity=".55"/><rect x="1016.8" y="394.1" width="1.3" height="1.3" fill="#9a9a9a"/><rect x="1017.4" y="394.8" width="1" height="1" fill="#555" opacity=".55"/><rect x="1016.8" y="396.9" width="1.3" height="1.3" fill="#9a9a9a"/><rect x="1017.4" y="397.6" width="1" height="1" fill="#555" opacity=".55"/></svg><div class="a w sel" style="left:889px;top:413px;width:64px;height:17px;border-radius:3.5px 0 0 3.5px;"></div><div class="t c wh" style="left:889px;width:64px;top:416.45px;color:#000">Сцена</div><div class="a w radio" style="left:952px;top:413px;width:66px;height:17px;border-radius:0 3.5px 3.5px 0;"></div><div class="t c wh" style="left:952px;width:66.2px;top:416.45px;">Объект</div><div class="a w menu" style="left:889px;top:435px;width:27px;height:17px;border-radius:3.5px 0 0 3.5px;"></div><svg class="a" style="left:892.6px;top:437.2px" width="13.4" height="13.4" viewBox="0 0 14 14"><path d="M1.2 12.8 L2.2 9.6 L9.8 2 L12 4.2 L4.4 11.8Z" fill="#8fd14a" stroke="#2a4a10" stroke-width=".8"/><path d="M9.8 2 L11 .8 L13.2 3 L12 4.2Z" fill="#e05a5a" stroke="#5a1a1a" stroke-width=".7"/><path d="M1.2 12.8 L2.2 9.6 L4.4 11.8Z" fill="#f0d8a0" stroke="#3a2a10" stroke-width=".6"/></svg><svg class="a" style="left:0;top:0" width="1200" height="637"><polygon points="908.7,443 913.7,443 911.2,438.4" fill="#b4b4b4"/><polygon points="908.7,445 913.7,445 911.2,449.6" fill="#b4b4b4"/></svg><div class="a w tool" style="left:916px;top:435px;width:102px;height:17px;border-radius:0 3.5px 3.5px 0;"></div><svg class="a" style="left:920.6px;top:437.4px" width="12.6" height="12.6" viewBox="0 0 12 12"><path d="M6 .8V11.2M.8 6H11.2" stroke="#2a2a2a" stroke-width="3.9"/><path d="M6 1.6V10.4M1.6 6H10.4" stroke="#f0f0f0" stroke-width="2.2"/></svg><div class="t c" style="left:930px;width:86px;top:438.45px">Создать</div><div class="a w tool" style="left:889px;top:457px;width:129px;height:17px;border-radius:3.5px;"></div><div class="t c " style="left:889px;width:129.2px;top:460.4px;">New Layer</div><div class="a " style="left:886px;top:480.5px;width:136px;height:1px;background:#5e5e5e"></div><div class="a " style="left:886px;top:481.5px;width:136px;height:1px;background:#7c7c7c"></div><svg class="a" style="left:0;top:0" width="1200" height="637"><polygon points="893.4,489.1 900.6,489.1 897,495.90000000000003" fill="#2a2a2a"/></svg><div class="t hd" style="left:904.4px;top:485.7px;">Вид</div><svg class="a" style="left:0;top:0" width="1200" height="637"><rect x="1006.6" y="491.5" width="1.3" height="1.3" fill="#9a9a9a"/><rect x="1007.2" y="492.2" width="1" height="1" fill="#555" opacity=".55"/><rect x="1006.6" y="494.3" width="1.3" height="1.3" fill="#9a9a9a"/><rect x="1007.2" y="495.0" width="1" height="1" fill="#555" opacity=".55"/><rect x="1009.2" y="491.5" width="1.3" height="1.3" fill="#9a9a9a"/><rect x="1009.8" y="492.2" width="1" height="1" fill="#555" opacity=".55"/><rect x="1009.2" y="494.3" width="1.3" height="1.3" fill="#9a9a9a"/><rect x="1009.8" y="495.0" width="1" height="1" fill="#555" opacity=".55"/><rect x="1011.8" y="491.5" width="1.3" height="1.3" fill="#9a9a9a"/><rect x="1012.4" y="492.2" width="1" height="1" fill="#555" opacity=".55"/><rect x="1011.8" y="494.3" width="1.3" height="1.3" fill="#9a9a9a"/><rect x="1012.4" y="495.0" width="1" height="1" fill="#555" opacity=".55"/><rect x="1014.4" y="491.5" width="1.3" height="1.3" fill="#9a9a9a"/><rect x="1015.0" y="492.2" width="1" height="1" fill="#555" opacity=".55"/><rect x="1014.4" y="494.3" width="1.3" height="1.3" fill="#9a9a9a"/><rect x="1015.0" y="495.0" width="1" height="1" fill="#555" opacity=".55"/></svg><div class="a w num" style="left:889px;top:510px;width:129px;height:16px;border-radius:8.3px;"></div><svg class="a" style="left:0;top:0" width="1200" height="637"><polygon points="897.6,515.5999999999999 897.6,520.8 894.2,518.1999999999999" fill="#6a6a6a"/><polygon points="1009.6,515.5999999999999 1009.6,520.8 1013.0,518.1999999999999" fill="#6a6a6a"/></svg><div class="t" style="left:903px;top:512.9px;">Объектив:</div><div class="t" style="right:195.8px;top:512.9px;">35.000</div><div class="t " style="left:896.5px;top:533px;letter-spacing:-.09px">Фиксировать к объекту:</div><div class="a" style="left:880px;top:548px;width:150px;height:11.8px;overflow:hidden"><div class="a w txtf" style="left:9px;top:0px;width:129px;height:17px;border-radius:3.5px;"></div><svg class="a" style="left:13.8px;top:2.2px" width="12.4" height="12.4" viewBox="0 0 14 14"><path d="M7 1 L12.6 3.4 V10.2 L7 13.2 L1.4 10.2 V3.4Z" fill="#e0903a" stroke="#5a3208" stroke-width=".8" stroke-linejoin="round"/><path d="M7 1 L12.6 3.4 L7 6 L1.4 3.4Z" fill="#fbe3c0"/><path d="M7 6 V13.2 L12.6 10.2 V3.4Z" fill="#c07020"/><path d="M1.4 3.4 L7 6 V13.2 L1.4 10.2Z" fill="#eca85a"/><path d="M1.4 3.4 L7 6 L12.6 3.4 M7 6V13.2" stroke="#8a5418" stroke-width=".5" fill="none"/></svg><svg class="a" style="left:123.6px;top:1.8px" width="13" height="13" viewBox="0 0 13 13"><path d="M1 12 L2 9.4 L7.6 3.8 L9.2 5.4 L3.6 11Z" fill="#d8d8d8" stroke="#222" stroke-width=".8"/><path d="M7 2.6 L10.4 6 M8.4 4 L10.4 1.6 C11.4 0.6 12.6 1.8 11.6 2.8 L9.4 5" stroke="#1a1a1a" stroke-width="1.8" fill="none" stroke-linecap="round"/></svg></div><div class="a " style="left:1024.8px;top:48px;width:12.2px;height:507.5px;background:linear-gradient(90deg,#575757,#626262);border:1px solid #4c4c4c;border-radius:6px"></div><div class="a " style="left:1024.8px;top:48px;width:12.2px;height:243px;background:linear-gradient(90deg,#989898,#7d7d7d);border:1px solid #444;border-radius:6px"></div><svg class="a" style="left:0;top:0" width="1200" height="637"><path d="M1030.0 44.5 L1040.0 54.5 M1033.0 44.5 L1040.0 51.5 M1036.0 44.5 L1040.0 48.5 " stroke="#303030" stroke-width="1.2" fill="none" transform="translate(-0.9,0.9)"/><path d="M1030.0 44.5 L1040.0 54.5 M1033.0 44.5 L1040.0 51.5 M1036.0 44.5 L1040.0 48.5 " stroke="#b2b2b2" stroke-width="1" fill="none"/></svg>
<!-- v3dheader -->
<div class="a " style="left:0px;top:558.5px;width:1040px;height:24.5px;background:#727272"></div><div class="a " style="left:0px;top:558.5px;width:1040px;height:1.5px;background:#727272"></div><div class="a " style="left:141px;top:559px;width:741px;height:1px;background:#5c5c5c"></div><div class="a " style="left:0px;top:560px;width:1040px;height:1px;background:#7e7e7e"></div><div class="a w menu" style="left:8px;top:562px;width:28px;height:17px;border-radius:3.5px;"></div><svg class="a" style="left:12px;top:564.3px" width="13" height="13.5" viewBox="0 0 13 13.5"><defs><linearGradient id="v3a" x1="0" x2="1"><stop offset="0" stop-color="#fdfdfd"/><stop offset="1" stop-color="#c4c4c4"/></linearGradient><linearGradient id="v3b" x1="0" y1="0" x2="0" y2="1"><stop offset="0" stop-color="#8a8a8a"/><stop offset="1" stop-color="#b8b8b8"/></linearGradient></defs><path d="M.8 2.4 C3 1.2 10 1.2 12.2 2.4 V9 C12.2 10.4 8.4 12.4 6.5 13 C4.6 12.4 .8 10.4 .8 9Z" fill="url(#v3a)" stroke="#1c1c1c" stroke-width=".9"/><path d="M6.5 3.4 C8.4 3.4 10.6 3 12.2 2.4 V9 C12.2 10.4 8.4 12.4 6.5 13Z" fill="url(#v3b)"/><path d="M.8 2.4 C3 3.6 10 3.6 12.2 2.4" fill="none" stroke="#fff" stroke-width=".8"/></svg><svg class="a" style="left:0;top:0" width="1200" height="637"><polygon points="27.7,569.7 32.7,569.7 30.2,565.1" fill="#b4b4b4"/><polygon points="27.7,571.7 32.7,571.7 30.2,576.3000000000001" fill="#b4b4b4"/></svg><div class="t " style="left:46px;top:566.1px;">Вид</div><div class="t " style="left:82.7px;top:566.1px;">Выделение</div><div class="t " style="left:154px;top:566.1px;">Добавить</div><div class="t " style="left:215.7px;top:566.1px;">Объект</div><div class="a w menu" style="left:260px;top:562px;width:114px;height:17px;border-radius:3.5px;"></div><svg class="a" style="left:265.2px;top:565px" width="11.6" height="11.6" viewBox="0 0 14 14"><path d="M7 1 L12.6 3.4 V10.2 L7 13.2 L1.4 10.2 V3.4Z" fill="#e0903a" stroke="#5a3208" stroke-width=".8" stroke-linejoin="round"/><path d="M7 1 L12.6 3.4 L7 6 L1.4 3.4Z" fill="#fbe3c0"/><path d="M7 6 V13.2 L12.6 10.2 V3.4Z" fill="#c07020"/><path d="M1.4 3.4 L7 6 V13.2 L1.4 10.2Z" fill="#eca85a"/><path d="M1.4 3.4 L7 6 L12.6 3.4 M7 6V13.2" stroke="#8a5418" stroke-width=".5" fill="none"/></svg><div class="t wh" style="left:281.3px;top:566.1px;">Режим объекта</div><svg class="a" style="left:0;top:0" width="1200" height="637"><polygon points="366.2,570.0 371.2,570.0 368.7,565.4" fill="#b4b4b4"/><polygon points="366.2,572.0 371.2,572.0 368.7,576.6" fill="#b4b4b4"/></svg><div class="a w menu" style="left:380px;top:562px;width:26px;height:17px;border-radius:3.5px;"></div><svg class="a" style="left:383px;top:564.8px" width="11.6" height="11.6" viewBox="0 0 14 14"><defs><radialGradient id="sg" cx=".38" cy=".32" r=".75"><stop offset="0" stop-color="#fff"/><stop offset=".6" stop-color="#e4e4e4"/><stop offset="1" stop-color="#9a9a9a"/></radialGradient></defs><circle cx="7" cy="7" r="6" fill="url(#sg)" stroke="#2a2a2a" stroke-width=".7"/></svg><svg class="a" style="left:0;top:0" width="1200" height="637"><polygon points="398.5,570.0 403.5,570.0 401,565.4" fill="#b4b4b4"/><polygon points="398.5,572.0 403.5,572.0 401,576.6" fill="#b4b4b4"/></svg><div class="a w menu" style="left:412px;top:562px;width:27px;height:17px;border-radius:3.5px 0 0 3.5px;"></div><svg class="a" style="left:414.2px;top:563.4px" width="15" height="15" viewBox="0 0 15 15"><circle cx="5.2" cy="5" r="4.1" fill="#dcdcdc" stroke="#222" stroke-width=".8"/><circle cx="9.6" cy="9.8" r="4.1" fill="#f4f4f4" stroke="#222" stroke-width=".8"/><rect x="5.6" y="5.8" width="3.2" height="3.2" fill="#2f6fe0" stroke="#0c2a6a" stroke-width=".6"/></svg><svg class="a" style="left:0;top:0" width="1200" height="637"><polygon points="430.8,570.0 435.8,570.0 433.3,565.4" fill="#b4b4b4"/><polygon points="430.8,572.0 435.8,572.0 433.3,576.6" fill="#b4b4b4"/></svg><div class="a w tool" style="left:438px;top:562px;width:18px;height:17px;border-radius:0 3.5px 3.5px 0;"></div><svg class="a" style="left:439.8px;top:563.4px" width="15" height="15" viewBox="0 0 15 15"><circle cx="3.6" cy="2.6" r="1.5" fill="#dfe8ff" stroke="#2a55b8" stroke-width=".8"/><circle cx="7.5" cy="2.6" r="1.5" fill="#dfe8ff" stroke="#2a55b8" stroke-width=".8"/><circle cx="11.4" cy="2.6" r="1.5" fill="#dfe8ff" stroke="#2a55b8" stroke-width=".8"/><path d="M1 9.6 L4.4 6.4 V8.4 H10.6 V6.4 L14 9.6 L10.6 12.8 V10.8 H4.4 V12.8Z" fill="#f6f6f6" stroke="#222" stroke-width=".8" stroke-linejoin="round"/></svg><div class="a w radio" style="left:462px;top:562px;width:18px;height:17px;border-radius:3.5px 0 0 3.5px;"></div><svg class="a" style="left:462.6px;top:563.2px" width="15" height="15" viewBox="0 0 15 15"><path d="M7.5 9.6 L1.8 13" stroke="#f04030" stroke-width="2.4" stroke-linecap="round"/><path d="M7.5 9.6 L13.2 13" stroke="#7ad030" stroke-width="2.4" stroke-linecap="round"/><path d="M7.5 9.6 V1.6" stroke="#4a7af0" stroke-width="2.4" stroke-linecap="round"/><path d="M7.1 9 V2" stroke="#cfe0ff" stroke-width=".7" stroke-linecap="round"/></svg><div class="a w sel" style="left:478px;top:562px;width:18px;height:17px;border-radius:0"></div><svg class="a" style="left:479.6px;top:563.6px" width="15" height="15" viewBox="0 0 15 15"><path d="M2.2 12.8 L10 5" stroke="#1d3d7e" stroke-width="3.4" stroke-linecap="round"/><path d="M6.6 3.6 L13.2 1.8 L11.4 8.4Z" fill="#a4c8ff" stroke="#1d3d7e" stroke-width="1.3" stroke-linejoin="round"/><path d="M2.2 12.8 L10.4 4.6" stroke="#a4c8ff" stroke-width="1.7" stroke-linecap="round"/></svg><div class="a w radio" style="left:496px;top:562px;width:18px;height:17px;border-radius:0"></div><svg class="a" style="left:497px;top:563.6px" width="15" height="15" viewBox="0 0 15 15"><path d="M2.6 12.6 C2.6 7 6.6 3.6 12.4 3.4" fill="none" stroke="#22345c" stroke-width="3.2" stroke-linecap="round"/><path d="M2.6 12.6 C2.6 7 6.6 3.6 12.4 3.4" fill="none" stroke="#5a7cb8" stroke-width="1.7" stroke-linecap="round"/></svg><div class="a w radio" style="left:514px;top:562px;width:18px;height:17px;border-radius:0"></div><svg class="a" style="left:514.6px;top:563.6px" width="15" height="15" viewBox="0 0 15 15"><path d="M2.4 12.8 L8.6 6.6" stroke="#22345c" stroke-width="3.2" stroke-linecap="round"/><path d="M2.4 12.8 L8.6 6.6" stroke="#5a7cb8" stroke-width="1.6" stroke-linecap="round"/><rect x="7.8" y="2.6" width="5.6" height="5.6" fill="#6482bc" stroke="#22345c" stroke-width="1"/></svg><div class="a w menu" style="left:532px;top:562px;width:80px;height:17px;border-radius:0 3.5px 3.5px 0;"></div><div class="t wh" style="left:537.6px;top:565.4px;margin-top:.7px">Глобально</div><svg class="a" style="left:0;top:0" width="1200" height="637"><polygon points="603.6,569.7 608.6,569.7 606.1,565.1" fill="#b4b4b4"/><polygon points="603.6,571.7 608.6,571.7 606.1,576.3000000000001" fill="#b4b4b4"/></svg><div class="a " style="left:617px;top:562px;width:44px;height:18px;background:#2e2e2e;border-radius:3.5px"></div><div class="a " style="left:618px;top:563px;width:8px;height:7px;background:linear-gradient(#747474,#6c6c6c);border-radius:3px 0 0 0;"></div><div class="a " style="left:627px;top:563px;width:8px;height:7px;background:linear-gradient(#969696,#8e8e8e);"></div><div class="a " style="left:636px;top:563px;width:7px;height:7px;background:linear-gradient(#969696,#8e8e8e);"></div><div class="a " style="left:644px;top:563px;width:8px;height:7px;background:linear-gradient(#969696,#8e8e8e);"></div><div class="a " style="left:653px;top:563px;width:7px;height:7px;background:linear-gradient(#969696,#8e8e8e);border-radius:0 3px 0 0;"></div><div class="a " style="left:618px;top:571px;width:8px;height:8px;background:linear-gradient(#8e8e8e,#868686);border-radius:0 0 0 3px;"></div><div class="a " style="left:627px;top:571px;width:8px;height:8px;background:linear-gradient(#8e8e8e,#868686);"></div><div class="a " style="left:636px;top:571px;width:7px;height:8px;background:linear-gradient(#8e8e8e,#868686);"></div><div class="a " style="left:644px;top:571px;width:8px;height:8px;background:linear-gradient(#8e8e8e,#868686);"></div><div class="a " style="left:653px;top:571px;width:7px;height:8px;background:linear-gradient(#8e8e8e,#868686);border-radius:0 0 3px 0;"></div><div class="a " style="left:618.3px;top:563.9px;width:4.6px;height:4.6px;background:radial-gradient(circle at 35% 30%,#ffd08a,#f08a1a 60%,#a05408);border-radius:2.5px"></div><div class="a " style="left:665px;top:562px;width:45px;height:18px;background:#2e2e2e;border-radius:3.5px"></div><div class="a " style="left:666px;top:563px;width:8px;height:7px;background:linear-gradient(#969696,#8e8e8e);border-radius:3px 0 0 0;"></div><div class="a " style="left:675px;top:563px;width:8px;height:7px;background:linear-gradient(#969696,#8e8e8e);"></div><div class="a " style="left:684px;top:563px;width:7px;height:7px;background:linear-gradient(#969696,#8e8e8e);"></div><div class="a " style="left:692px;top:563px;width:8px;height:7px;background:linear-gradient(#969696,#8e8e8e);"></div><div class="a " style="left:701px;top:563px;width:8px;height:7px;background:linear-gradient(#969696,#8e8e8e);border-radius:0 3px 0 0;"></div><div class="a " style="left:666px;top:571px;width:8px;height:8px;background:linear-gradient(#8e8e8e,#868686);border-radius:0 0 0 3px;"></div><div class="a " style="left:675px;top:571px;width:8px;height:8px;background:linear-gradient(#8e8e8e,#868686);"></div><div class="a " style="left:684px;top:571px;width:7px;height:8px;background:linear-gradient(#8e8e8e,#868686);"></div><div class="a " style="left:692px;top:571px;width:8px;height:8px;background:linear-gradient(#8e8e8e,#868686);"></div><div class="a " style="left:701px;top:571px;width:8px;height:8px;background:linear-gradient(#8e8e8e,#868686);border-radius:0 0 3px 0;"></div><div class="a w" style="left:714px;top:562px;width:16px;height:17px;border-radius:3.5px;background:linear-gradient(#5a5a5a,#6c6c6c)"></div><svg class="a" style="left:714.2px;top:563.2px" width="15" height="15" viewBox="0 0 15 15"><defs><linearGradient id="lkv" x1="0" y1="0" x2="1" y2="1"><stop offset="0" stop-color="#d4d4d4"/><stop offset="1" stop-color="#6e6e6e"/></linearGradient></defs><rect x="1" y="2.2" width="9.6" height="9.8" fill="url(#lkv)" stroke="#1a1a1a" stroke-width=".9"/><rect x="9.6" y="3.2" width="3.8" height="5" rx="1.8" fill="none" stroke="#222" stroke-width="2.4"/><rect x="9.6" y="7.8" width="3.8" height="5" rx="1.8" fill="none" stroke="#222" stroke-width="2.4"/><rect x="9.6" y="3.2" width="3.8" height="5" rx="1.8" fill="none" stroke="#f4f4f4" stroke-width="1.2"/><rect x="9.6" y="7.8" width="3.8" height="5" rx="1.8" fill="none" stroke="#f4f4f4" stroke-width="1.2"/></svg><div class="a w tool" style="left:735px;top:562px;width:18px;height:17px;border-radius:3.5px;"></div><svg class="a" style="left:737px;top:563.8px" width="14" height="14" viewBox="0 0 14 14"><circle cx="7" cy="7" r="5.4" fill="none" stroke="#b4b4b4" stroke-width="1.5"/><circle cx="7" cy="7" r="2.6" fill="none" stroke="#b4b4b4" stroke-width="1.4"/></svg><div class="a w tool" style="left:757px;top:562px;width:18px;height:17px;border-radius:3.5px 0 0 3.5px;"></div><svg class="a" style="left:758.6px;top:563.8px" width="14" height="14" viewBox="0 0 14 14"><path d="M3.6 7.2 L7.6 3.2 A2.9 2.9 0 0 1 11.8 7.3 L7.8 11.4" fill="none" stroke="#5e5e5e" stroke-width="3.6"/><path d="M3.6 7.2 L7.6 3.2 A2.9 2.9 0 0 1 11.8 7.3 L7.8 11.4" fill="none" stroke="#c6c6c6" stroke-width="2.2"/><path d="M3.6 7.2 L4.6 6.2 M7.8 11.4 L8.8 10.4" stroke="#efefef" stroke-width="2.2"/></svg><div class="a w menu" style="left:774px;top:562px;width:29px;height:17px;border-radius:0"></div><svg class="a" style="left:776.6px;top:564.4px" width="17" height="13" viewBox="0 0 17 13"><path d="M1 6.5H16" stroke="#e8e8e8" stroke-width="1"/><path d="M2.2 3.4V9.6M5.2 3.4V9.6M11.8 3.4V9.6M14.8 3.4V9.6" stroke="#e8e8e8" stroke-width="1.1"/><path d="M8.5 1.6V11.4" stroke="#3b78ea" stroke-width="2.4" stroke-linecap="round"/><path d="M8.5 2V11" stroke="#a4c8ff" stroke-width=".8"/></svg><svg class="a" style="left:0;top:0" width="1200" height="637"><polygon points="794.7,570.0 799.7,570.0 797.2,565.4" fill="#b4b4b4"/><polygon points="794.7,572.0 799.7,572.0 797.2,576.6" fill="#b4b4b4"/></svg><div class="a w tool" style="left:802px;top:562px;width:18px;height:17px;border-radius:0 3.5px 3.5px 0;"></div><svg class="a" style="left:804px;top:563.2px" width="15" height="15" viewBox="0 0 15 15"><path d="M5 1V14M9.6 1V14M13.4 1V14M1 7.4H14.4M1 11.6H14.4" stroke="#2a2a2a" stroke-width=".9" stroke-dasharray="1.6 1"/><circle cx="5.8" cy="4.2" r="2.9" fill="#f4f8ff" stroke="#2d66d8" stroke-width="1.6"/></svg><div class="a w tool" style="left:826px;top:562px;width:17px;height:17px;border-radius:3.5px 0 0 3.5px;"></div><svg class="a" style="left:826.6px;top:563.2px" width="15" height="15" viewBox="0 0 15 15"><path d="M2.2 4.8 L4 2.6 H6 L7.2 4.8Z" fill="#e8e8e8" stroke="#1a1a1a" stroke-width=".7"/><rect x="1" y="4.6" width="12.8" height="8.8" rx=".8" fill="#d2d2d2" stroke="#1a1a1a" stroke-width=".9"/><rect x="1.6" y="6.4" width="11.6" height="5.2" fill="#3a3a3a"/><rect x="1.6" y="11.6" width="11.6" height="1.2" fill="#efefef"/><circle cx="3.6" cy="5.5" r=".8" fill="#f03030"/><circle cx="8.4" cy="9.4" r="3.2" fill="#e4e4e4" stroke="#1a1a1a" stroke-width=".8"/><circle cx="8.4" cy="9.4" r="2" fill="#3a5a90"/><path d="M8.4 9.4 L10.2 10.4 A2 2 0 0 1 7.4 11.1Z" fill="#d83030"/><path d="M12.2 .2 L13.1 2.4 L15.2 3 L13.1 3.8 L12.2 6 L11.3 3.8 L9.2 3 L11.3 2.4Z" fill="#ffe95a" stroke="#b89a18" stroke-width=".3"/></svg><div class="a w tool" style="left:842px;top:562px;width:18px;height:17px;border-radius:0 3.5px 3.5px 0;"></div><svg class="a" style="left:843.2px;top:563.2px" width="15" height="15" viewBox="0 0 15 15"><rect x="1.4" y="6.6" width="12.4" height="7.2" fill="#2a2a2a" stroke="#0a0a0a" stroke-width=".8"/><rect x="2.6" y="9.6" width="10" height="1" fill="#ddd"/><rect x="2.6" y="11.6" width="10" height="1" fill="#bbb"/><path d="M1 5.8 L13 1.2 L13.8 3.4 L1.8 8Z" fill="#f2f2f2" stroke="#0a0a0a" stroke-width=".8"/><path d="M3.4 5 L5 7 M6.4 3.8 L8 5.8 M9.4 2.6 L11 4.6" stroke="#111" stroke-width="1.6"/></svg><svg class="a" style="left:0;top:0" width="1200" height="637"><path d="M0.0 573.0 L10.0 583.0 M0.0 576.0 L7.0 583.0 M0.0 579.0 L4.0 583.0 " stroke="#303030" stroke-width="1.2" fill="none" transform="translate(-0.9,0.9)"/><path d="M0.0 573.0 L10.0 583.0 M0.0 576.0 L7.0 583.0 M0.0 579.0 L4.0 583.0 " stroke="#b2b2b2" stroke-width="1" fill="none"/></svg>
<!-- timeline -->
<div class="a " style="left:0px;top:583px;width:1040px;height:54px;background:#727272"></div><div class="a " style="left:0px;top:582px;width:1040px;height:1px;background:#4c4c4c"></div><div class="a " style="left:0px;top:583px;width:1040px;height:1px;background:#242424"></div><div class="a " style="left:0px;top:584px;width:177px;height:17px;background:#444"></div><div class="a " style="left:938.6px;top:584px;width:101.4px;height:17px;background:#444"></div><svg class="a" style="left:0;top:0" width="1200" height="637"><rect x="24.0" y="584" width="1" height="17" fill="#404040"/><rect x="54.5" y="584" width="1" height="17" fill="#3a3a3a"/><rect x="84.9" y="584" width="1" height="17" fill="#404040"/><rect x="115.4" y="584" width="1" height="17" fill="#3a3a3a"/><rect x="145.9" y="584" width="1" height="17" fill="#404040"/><rect x="176.3" y="584" width="1" height="17" fill="#3a3a3a"/><rect x="206.8" y="584" width="1" height="17" fill="#6b6b6b"/><rect x="237.3" y="584" width="1" height="17" fill="#606060"/><rect x="267.8" y="584" width="1" height="17" fill="#6b6b6b"/><rect x="298.2" y="584" width="1" height="17" fill="#606060"/><rect x="328.7" y="584" width="1" height="17" fill="#6b6b6b"/><rect x="359.2" y="584" width="1" height="17" fill="#606060"/><rect x="389.6" y="584" width="1" height="17" fill="#6b6b6b"/><rect x="420.1" y="584" width="1" height="17" fill="#606060"/><rect x="450.6" y="584" width="1" height="17" fill="#6b6b6b"/><rect x="481.0" y="584" width="1" height="17" fill="#606060"/><rect x="511.5" y="584" width="1" height="17" fill="#6b6b6b"/><rect x="542.0" y="584" width="1" height="17" fill="#606060"/><rect x="572.5" y="584" width="1" height="17" fill="#6b6b6b"/><rect x="602.9" y="584" width="1" height="17" fill="#606060"/><rect x="633.4" y="584" width="1" height="17" fill="#6b6b6b"/><rect x="663.9" y="584" width="1" height="17" fill="#606060"/><rect x="694.3" y="584" width="1" height="17" fill="#6b6b6b"/><rect x="724.8" y="584" width="1" height="17" fill="#606060"/><rect x="755.3" y="584" width="1" height="17" fill="#6b6b6b"/><rect x="785.8" y="584" width="1" height="17" fill="#606060"/><rect x="816.2" y="584" width="1" height="17" fill="#6b6b6b"/><rect x="846.7" y="584" width="1" height="17" fill="#606060"/><rect x="877.2" y="584" width="1" height="17" fill="#6b6b6b"/><rect x="907.6" y="584" width="1" height="17" fill="#606060"/><rect x="938.1" y="584" width="1" height="17" fill="#6b6b6b"/><rect x="968.6" y="584" width="1" height="17" fill="#3a3a3a"/><rect x="999.0" y="584" width="1" height="17" fill="#404040"/><rect x="1029.5" y="584" width="1" height="17" fill="#3a3a3a"/><rect x="177" y="584" width="1" height="17" fill="#2a2a2a"/><rect x="178" y="584" width="3" height="17" fill="#5fc43c"/></svg><div class="a " style="left:0px;top:584px;width:1040px;height:1px;background:rgba(255,255,255,.09)"></div><div class="a " style="left:3.5px;top:602.3px;width:1033px;height:10.6px;background:linear-gradient(#7d7d7d,#9a9a9a);border:1px solid #4a4a4a;border-radius:5.5px"></div><div class="a " style="left:5px;top:604px;width:7.5px;height:7.5px;background:#6a6a6a;border:1px solid #555;border-radius:4px"></div><div class="a " style="left:1027.5px;top:604px;width:7.5px;height:7.5px;background:#6a6a6a;border:1px solid #555;border-radius:4px"></div><div class="t c" style="left:36.1px;width:40px;top:601.8000000000001px">-40</div><div class="t c" style="left:96.5px;width:40px;top:601.8000000000001px">-20</div><div class="t c" style="left:158.5px;width:40px;top:601.8000000000001px">0</div><div class="t c" style="left:218.9px;width:40px;top:601.8000000000001px">20</div><div class="t c" style="left:279.3px;width:40px;top:601.8000000000001px">40</div><div class="t c" style="left:339.6px;width:40px;top:601.8000000000001px">60</div><div class="t c" style="left:400.0px;width:40px;top:601.8000000000001px">80</div><div class="t c" style="left:460.4px;width:40px;top:601.8000000000001px">100</div><div class="t c" style="left:520.8px;width:40px;top:601.8000000000001px">120</div><div class="t c" style="left:581.2px;width:40px;top:601.8000000000001px">140</div><div class="t c" style="left:641.5px;width:40px;top:601.8000000000001px">160</div><div class="t c" style="left:701.9px;width:40px;top:601.8000000000001px">180</div><div class="t c" style="left:762.3px;width:40px;top:601.8000000000001px">200</div><div class="t c" style="left:822.7px;width:40px;top:601.8000000000001px">220</div><div class="t c" style="left:883.1px;width:40px;top:601.8000000000001px">240</div><div class="t c" style="left:943.4px;width:40px;top:601.8000000000001px">260</div><div class="t c" style="left:1003.8px;width:40px;top:601.8000000000001px">280</div><div class="a " style="left:0px;top:613.4px;width:1040px;height:1px;background:#6a6a6a"></div><div class="a " style="left:0px;top:614.6px;width:1040px;height:2px;background:#797979"></div><div class="a " style="left:0px;top:617.4px;width:1040px;height:20px;background:#696969"></div><div class="a w menu" style="left:8px;top:620px;width:28px;height:16px;border-radius:3.5px;"></div><svg class="a" style="left:11.8px;top:621.5px" width="12.4" height="12.4" viewBox="0 0 14 14"><circle cx="7" cy="7" r="6" fill="#f2f2f2" stroke="#222" stroke-width="1"/><circle cx="7" cy="7" r="4.6" fill="none" stroke="#bbb" stroke-width=".6"/><path d="M7.6 7.4 L4.8 4.2" stroke="#777" stroke-width=".8"/><path d="M7.6 7.4 L5.4 9.6 M7.6 7.4 L9 5.4" stroke="#d02828" stroke-width="1.2" stroke-linecap="round"/></svg><svg class="a" style="left:0;top:0" width="1200" height="637"><polygon points="27.7,626.8000000000001 32.7,626.8000000000001 30.2,622.2" fill="#b4b4b4"/><polygon points="27.7,628.8000000000001 32.7,628.8000000000001 30.2,633.4000000000001" fill="#b4b4b4"/></svg><div class="t " style="left:46.5px;top:622.8px;">Вид</div><div class="t " style="left:82.7px;top:622.8px;">Маркер</div><div class="t " style="left:134.2px;top:622.8px;">Кадр</div><div class="t " style="left:174.7px;top:622.8px;">Воспроизведение</div><div class="a w tool" style="left:270px;top:620px;width:17px;height:16px;border-radius:3.5px 0 0 3.5px;"></div><svg class="a" style="left:272.2px;top:621.9px" width="12.6" height="12.6" viewBox="0 0 14 14"><circle cx="7" cy="7" r="6" fill="#f2f2f2" stroke="#222" stroke-width="1"/><path d="M7 7 V1.6 A5.4 5.4 0 0 1 12.4 7Z" fill="#f4a418"/><path d="M7 7 L9.2 10" stroke="#d03030" stroke-width="1.3" stroke-linecap="round"/><path d="M7 2V7H12" stroke="#4a3a10" stroke-width=".7" fill="none"/></svg><div class="a w tool" style="left:287px;top:620px;width:17px;height:16px;border-radius:0 3.5px 3.5px 0;"></div><svg class="a" style="left:290.2px;top:622.0px" width="12.4" height="12.4" viewBox="0 0 14 14"><path d="M4 6.4 V4.4 C4 .8 10 .8 10 4.4 V6.4" fill="none" stroke="#2a2a2a" stroke-width="2.6"/><path d="M4 6.4 V4.4 C4 .8 10 .8 10 4.4 V6.4" fill="none" stroke="#f2f2f2" stroke-width="1.2"/><rect x="2.2" y="6.2" width="9.6" height="7" fill="#f4f4f4" stroke="#2a2a2a" stroke-width="1"/><rect x="3.6" y="8.6" width="6.8" height="2.4" fill="#c4c4c4"/><circle cx="7" cy="9.8" r="1.1" fill="#222"/></svg><div class="a w num" style="left:310px;top:620px;width:115px;height:16px;border-radius:8.2px 0 0 8.2px;"></div><svg class="a" style="left:0;top:0" width="1200" height="637"><polygon points="318.6,625.2 318.6,630.4000000000001 315.2,627.8000000000001" fill="#6a6a6a"/><polygon points="416.4,625.2 416.4,630.4000000000001 419.8,627.8000000000001" fill="#6a6a6a"/></svg><div class="t" style="left:323.7px;top:622.5px;">Начало:</div><div class="t" style="right:789.5px;top:622.5px;">1</div><div class="a w num" style="left:424px;top:620px;width:111px;height:16px;border-radius:0 8.2px 8.2px 0;"></div><svg class="a" style="left:0;top:0" width="1200" height="637"><polygon points="432.8,625.2 432.8,630.4000000000001 429.4,627.8000000000001" fill="#6a6a6a"/><polygon points="526.6,625.2 526.6,630.4000000000001 530.0,627.8000000000001" fill="#6a6a6a"/></svg><div class="t" style="left:437.9px;top:622.5px;">Конец:</div><div class="t" style="right:679.3px;top:622.5px;">250</div><div class="a w num" style="left:541px;top:620px;width:78px;height:16px;border-radius:8.2px;"></div><svg class="a" style="left:0;top:0" width="1200" height="637"><polygon points="549.8000000000001,625.2 549.8000000000001,630.4000000000001 546.4000000000001,627.8000000000001" fill="#6a6a6a"/><polygon points="610.2,625.2 610.2,630.4000000000001 613.6,627.8000000000001" fill="#6a6a6a"/></svg><div class="t" style="left:558.2px;top:622.5px;"></div><div class="t" style="right:595.2px;top:622.5px;">1</div><div class="a w tool" style="left:633px;top:620px;width:19px;height:16px;border-radius:3.5px 0 0 3.5px;"></div><svg class="a" style="left:635.1999999999999px;top:620.8000000000001px" width="14" height="14" viewBox="0 0 15 15"><rect x="1.2" y="3.4" width="1.8" height="8.2" fill="#f4f4f4" stroke="#1a1a1a" stroke-width=".9" stroke-linejoin="round"/><path d="M8 3.4V11.6L3.2 7.5Z" fill="#f4f4f4" stroke="#1a1a1a" stroke-width=".9" stroke-linejoin="round"/><path d="M13 3.4V11.6L8.2 7.5Z" fill="#f4f4f4" stroke="#1a1a1a" stroke-width=".9" stroke-linejoin="round"/></svg><div class="a w tool" style="left:651px;top:620px;width:18px;height:16px;border-radius:0;"></div><svg class="a" style="left:652.5999999999999px;top:620.8000000000001px" width="14" height="14" viewBox="0 0 15 15"><path d="M7.4 3.4V11.6L2 7.5Z" fill="#f4f4f4" stroke="#1a1a1a" stroke-width=".9" stroke-linejoin="round"/><path d="M13 3.4V11.6L7.6 7.5Z" fill="#f4f4f4" stroke="#1a1a1a" stroke-width=".9" stroke-linejoin="round"/></svg><div class="a w tool" style="left:668px;top:620px;width:19px;height:16px;border-radius:0;"></div><svg class="a" style="left:670.0px;top:620.8000000000001px" width="14" height="14" viewBox="0 0 15 15"><path d="M11.6 1.8V13.2L2.4 7.5Z" fill="#f4f4f4" stroke="#1a1a1a" stroke-width=".9" stroke-linejoin="round"/></svg><div class="a w tool" style="left:686px;top:620px;width:19px;height:16px;border-radius:0;"></div><svg class="a" style="left:687.5px;top:620.8000000000001px" width="14" height="14" viewBox="0 0 15 15"><path d="M3.4 1.8V13.2L12.6 7.5Z" fill="#f4f4f4" stroke="#1a1a1a" stroke-width=".9" stroke-linejoin="round"/></svg><div class="a w tool" style="left:704px;top:620px;width:18px;height:16px;border-radius:0;"></div><svg class="a" style="left:705.4px;top:620.8000000000001px" width="14" height="14" viewBox="0 0 15 15"><path d="M2 3.4V11.6L7.4 7.5Z" fill="#f4f4f4" stroke="#1a1a1a" stroke-width=".9" stroke-linejoin="round"/><path d="M7.6 3.4V11.6L13 7.5Z" fill="#f4f4f4" stroke="#1a1a1a" stroke-width=".9" stroke-linejoin="round"/></svg><div class="a w tool" style="left:721px;top:620px;width:17px;height:16px;border-radius:0 3.5px 3.5px 0;"></div><svg class="a" style="left:723.0px;top:620.8000000000001px" width="14" height="14" viewBox="0 0 15 15"><path d="M2 3.4V11.6L6.8 7.5Z" fill="#f4f4f4" stroke="#1a1a1a" stroke-width=".9" stroke-linejoin="round"/><path d="M7 3.4V11.6L11.8 7.5Z" fill="#f4f4f4" stroke="#1a1a1a" stroke-width=".9" stroke-linejoin="round"/><rect x="12" y="3.4" width="1.8" height="8.2" fill="#f4f4f4" stroke="#1a1a1a" stroke-width=".9" stroke-linejoin="round"/></svg><div class="a w menu" style="left:744px;top:620px;width:122px;height:16px;border-radius:3.5px;"></div><div class="t wh" style="left:750.7px;top:622.5px;">Без синхронизации</div><svg class="a" style="left:0;top:0" width="1200" height="637"><polygon points="857.9,626.8000000000001 862.9,626.8000000000001 860.4,622.2" fill="#b4b4b4"/><polygon points="857.9,628.8000000000001 862.9,628.8000000000001 860.4,633.4000000000001" fill="#b4b4b4"/></svg><div class="a w tool" style="left:881px;top:620px;width:16px;height:16px;border-radius:3.5px;"></div><svg class="a" style="left:882.6px;top:621.4px" width="13" height="13" viewBox="0 0 13 13"><circle cx="6.5" cy="6.5" r="4.7" fill="#f0c4b8" stroke="#6a2a20" stroke-width=".8"/><circle cx="6.5" cy="6.5" r="3.3" fill="#e4401e"/><circle cx="5.6" cy="5.4" r="1.1" fill="#ff8a6a" opacity=".7"/></svg><div class="a w menu" style="left:902px;top:620px;width:28px;height:16px;border-radius:3.5px;"></div><svg class="a" style="left:904.8px;top:621.4px" width="13" height="13" viewBox="0 0 13 13"><path d="M6.5 2 L11 6.5 L6.5 11 L2 6.5Z" fill="#f4b020" stroke="#fff4c0" stroke-width=".8"/></svg><svg class="a" style="left:0;top:0" width="1200" height="637"><polygon points="921.5,627.1 926.5,627.1 924,622.5" fill="#b4b4b4"/><polygon points="921.5,629.1 926.5,629.1 924,633.7" fill="#b4b4b4"/></svg><div class="a w txtf" style="left:935px;top:620px;width:110px;height:16px;border-radius:3.5px 0 0 3.5px;"></div><svg class="a" style="left:938px;top:620.4px" width="15" height="15" viewBox="0 0 15 15"><path d="M5.2 12.4 L11.2 7.2" stroke="#2a2a2a" stroke-width="3" stroke-linecap="round"/><path d="M5.2 12.4 L11.2 7.2" stroke="#f2f2f2" stroke-width="1.5" stroke-linecap="round"/><circle cx="11.8" cy="6.4" r="2.2" fill="#f4f4f4" stroke="#2a2a2a" stroke-width=".8"/><circle cx="12" cy="6.2" r=".7" fill="#555"/><path d="M4 2 V11" stroke="#3a3410" stroke-width="3"/><path d="M4 2 V11" stroke="#f0e27a" stroke-width="1.5"/><path d="M4 3.2 H6.4 M4 5.4 H6" stroke="#3a3410" stroke-width="2.2"/><path d="M4 3.2 H6 M4 5.4 H5.6" stroke="#f0e27a" stroke-width="1"/><circle cx="4" cy="12" r="2.4" fill="#f0e27a" stroke="#3a3410" stroke-width=".8"/><circle cx="4" cy="12.2" r=".8" fill="#4a4418"/></svg><svg class="a" style="left:0;top:0" width="1200" height="637"><path d="M0.0 627.5 L10.0 637.5 M0.0 630.5 L7.0 637.5 M0.0 633.5 L4.0 637.5 " stroke="#303030" stroke-width="1.2" fill="none" transform="translate(-0.9,0.9)"/><path d="M0.0 627.5 L10.0 637.5 M0.0 630.5 L7.0 637.5 M0.0 633.5 L4.0 637.5 " stroke="#b2b2b2" stroke-width="1" fill="none"/></svg><svg class="a" style="left:0;top:0" width="1200" height="637"><path d="M1030.0 584.0 L1040.0 594.0 M1033.0 584.0 L1040.0 591.0 M1036.0 584.0 L1040.0 588.0 " stroke="#303030" stroke-width="1.2" fill="none" transform="translate(-0.9,0.9)"/><path d="M1030.0 584.0 L1040.0 594.0 M1033.0 584.0 L1040.0 591.0 M1036.0 584.0 L1040.0 588.0 " stroke="#b2b2b2" stroke-width="1" fill="none"/></svg>
<!-- outliner -->
<div class="a " style="left:1041px;top:44px;width:159px;height:96.5px;background:#727272"></div><div class="a " style="left:1040px;top:44px;width:1.3px;height:593px;background:#171717"></div><div class="a " style="left:1041px;top:44px;width:159px;height:22.5px;background:#696969"></div><div class="a w menu" style="left:1049px;top:47px;width:28px;height:17px;border-radius:3.5px;"></div><svg class="a" style="left:1052px;top:48px" width="15" height="15" viewBox="0 0 15 15"><rect x="1" y="1" width="6.4" height="2.6" fill="#f4a030" stroke="#6a3a08" stroke-width=".6"/><path d="M3 3.6 V12 H6 M3 7.6 H6" stroke="#9cc0f4" stroke-width="1" fill="none"/><rect x="6" y="6.2" width="7.4" height="2.6" fill="#f4f4f4" stroke="#333" stroke-width=".6"/><rect x="6" y="10.6" width="7.4" height="2.6" fill="#f4f4f4" stroke="#333" stroke-width=".6"/></svg><svg class="a" style="left:0;top:0" width="1200" height="637"><polygon points="1069.2,54.4 1074.2,54.4 1071.7,49.8" fill="#b4b4b4"/><polygon points="1069.2,56.4 1074.2,56.4 1071.7,61.0" fill="#b4b4b4"/></svg><div class="t " style="left:1087.9px;top:49.6px;">Вид</div><div class="t " style="left:1124px;top:49.6px;letter-spacing:.18px">Поиск</div><div class="a w menu" style="left:1164px;top:47px;width:50px;height:17px;border-radius:3.5px 0 0 3.5px;"></div><div class="t wh" style="left:1171px;top:49.6px;">Все сцены</div><div class="a " style="left:1041px;top:66.5px;width:159px;height:74px;background:#727272;overflow:hidden"></div><div class="a " style="left:1041px;top:85.9px;width:159px;height:17.5px;background:rgba(255,255,255,.035)"></div><div class="a " style="left:1041px;top:120.9px;width:159px;height:17.5px;background:rgba(255,255,255,.035)"></div><div class="a " style="left:1041px;top:68px;width:91.5px;height:16.4px;background:#858b91"></div><div class="a " style="left:1132.4px;top:66.5px;width:1px;height:60px;background:#686868"></div><div class="a " style="left:1150.9px;top:66.5px;width:1px;height:60px;background:#686868"></div><div class="a " style="left:1167.4px;top:66.5px;width:1px;height:60px;background:#686868"></div><div class="a " style="left:1043px;top:85px;width:1px;height:42px;background:#5a5a5a"></div><div class="a" style="left:1041px;top:66px;width:20px;height:20px;overflow:hidden"><svg class="a" style="left:-3.5px;top:3.2px" width="13.5" height="13.5" viewBox="0 0 13 13"><defs><linearGradient id="scy" x1="0" x2="1"><stop offset="0" stop-color="#9cc4ff"/><stop offset=".45" stop-color="#3f74d4"/><stop offset="1" stop-color="#1f468f"/></linearGradient><radialGradient id="scs" cx=".35" cy=".3" r=".8"><stop offset="0" stop-color="#fff"/><stop offset=".7" stop-color="#d8d8d8"/><stop offset="1" stop-color="#8a8a8a"/></radialGradient></defs><circle cx="2.4" cy="2.4" r="2.3" fill="#f4ec70" opacity=".35"/><circle cx="2.4" cy="2.4" r="1.2" fill="#f6f08a"/><rect x="6.4" y=".9" width="5.8" height="10" rx="2.4" fill="url(#scy)" stroke="#1a2a52" stroke-width=".7"/><ellipse cx="9.3" cy="2.5" rx="2.3" ry="1.2" fill="#c8dcff" opacity=".8"/><circle cx="4.8" cy="9.4" r="3.2" fill="url(#scs)" stroke="#262626" stroke-width=".8"/></svg></div><div class="t " style="left:1054.5px;top:71.4px;">Scene</div><div class="a " style="left:1040.8px;top:91.6px;width:6px;height:6px;border:1px solid #1a1a1a;border-radius:3px;background:#c8c8c8"></div><div class="a " style="left:1042px;top:94.1px;width:3.6px;height:1px;background:#111"></div><div class="a " style="left:1043.3px;top:92.8px;width:1px;height:3.6px;background:#111"></div><svg class="a" style="left:1053.6px;top:87px" width="15" height="15" viewBox="0 0 15 15"><rect x="5" y="4.6" width="8.6" height="8.6" fill="#d8d0b8" stroke="#333" stroke-width=".8" transform="rotate(8 9 9)"/><rect x="3" y="3" width="8.6" height="8.6" fill="#e8e8e8" stroke="#333" stroke-width=".8" transform="rotate(4 7 7)"/><rect x="1.2" y="1.2" width="8.8" height="8.8" fill="#f8f8f8" stroke="#222" stroke-width=".8"/><rect x="5.4" y="2.4" width="2.6" height="4.4" rx="1" fill="#3a6ad0"/><circle cx="4.4" cy="7" r="1.7" fill="#bbb" stroke="#444" stroke-width=".5"/><circle cx="3" cy="3" r=".9" fill="#f0d020"/></svg><div class="a" style="left:1072px;top:86px;width:60.4px;height:17px;overflow:hidden"><div class="t " style="left:0px;top:2.9px;">Слои визуализации</div></div><svg class="a" style="left:1053.6px;top:104.4px" width="15" height="15" viewBox="0 0 15 15"><circle cx="7.5" cy="7.5" r="6.9" fill="#c9cce2" stroke="#4c4c68" stroke-width=".7"/><circle cx="7.5" cy="7.5" r="5.4" fill="#3f6fb6" stroke="#2a3c66" stroke-width=".6"/><path d="M3.4 5 C4.6 3.2 6.4 3.4 7 4.4 C7.6 5.6 6.4 6 6.2 7.2 C6 8.6 4.8 8.4 4.4 7.4 C4 6.6 2.8 6.2 3.4 5Z M8.2 6.6 C9.4 5.6 11.2 6.2 11.6 7.6 C11.8 9.2 10.8 11 9.6 11.4 C8.6 11.6 8.8 10 8.2 9.2 C7.6 8.2 7.4 7.2 8.2 6.6Z M7 10.6 C7.6 10.6 7.8 11.8 7.2 12.2 C6.6 12.2 6.4 11 7 10.6Z" fill="#4d8c36"/><ellipse cx="5.8" cy="4.4" rx="2.6" ry="1.3" fill="#fff" opacity=".35"/></svg><div class="t " style="left:1072px;top:106.2px;">World</div><div class="a" style="left:1041px;top:121.5px;width:150px;height:5.5px;overflow:hidden"><svg class="a" style="left:12.6px;top:1px" width="14" height="14" viewBox="0 0 14 14"><path d="M7 1 L12.6 3.4 V10.2 L7 13.2 L1.4 10.2 V3.4Z" fill="#e0903a" stroke="#5a3208" stroke-width=".8" stroke-linejoin="round"/><path d="M7 1 L12.6 3.4 L7 6 L1.4 3.4Z" fill="#fbe3c0"/><path d="M7 6 V13.2 L12.6 10.2 V3.4Z" fill="#c07020"/><path d="M1.4 3.4 L7 6 V13.2 L1.4 10.2Z" fill="#eca85a"/><path d="M1.4 3.4 L7 6 L12.6 3.4 M7 6V13.2" stroke="#8a5418" stroke-width=".5" fill="none"/></svg></div><div class="a " style="left:1115px;top:124px;width:1px;height:2.6px;background:#3a3a3a"></div><svg class="a" style="left:0;top:0" width="1200" height="637"><path d="M1126 126.6 L1129.4 121.4 L1132.4 122.6 L1130 124.2 L1132.4 126.6Z" fill="#c8c8c8"/><path d="M1139.6 125.6H1144" stroke="#4a4a4a" stroke-width="1.4"/><path d="M1157 122.6 L1161 126.6 H1157Z" fill="#111"/><path d="M1158 125 L1160 126.6 H1158Z" fill="#eee"/><path d="M1172.4 126.6 C1172.6 123.6 1175 123.8 1177 124.4 L1181.8 125 V126.6Z" fill="#ececec"/></svg><div class="a " style="left:1045px;top:126.7px;width:136px;height:11px;background:#565656;border:1px solid #484848;border-radius:5.5px"></div><div class="a " style="left:1057.4px;top:126.7px;width:74px;height:11px;background:linear-gradient(#8a8a8a,#777);border:1px solid #3c3c3c;border-radius:5.5px"></div><div class="a " style="left:1185.3px;top:71.3px;width:11.3px;height:50.3px;background:linear-gradient(90deg,#575757,#626262);border:1px solid #4c4c4c;border-radius:6px"></div><div class="a " style="left:1185.3px;top:71.3px;width:11.3px;height:23.9px;background:linear-gradient(90deg,#989898,#7d7d7d);border:1px solid #444;border-radius:6px"></div><div class="a " style="left:1041px;top:140px;width:159px;height:2.5px;background:#333"></div><svg class="a" style="left:0;top:0" width="1200" height="637"><path d="M1190.0 44.5 L1200.0 54.5 M1193.0 44.5 L1200.0 51.5 M1196.0 44.5 L1200.0 48.5 " stroke="#303030" stroke-width="1.2" fill="none" transform="translate(-0.9,0.9)"/><path d="M1190.0 44.5 L1200.0 54.5 M1193.0 44.5 L1200.0 51.5 M1196.0 44.5 L1200.0 48.5 " stroke="#b2b2b2" stroke-width="1" fill="none"/></svg><svg class="a" style="left:0;top:0" width="1200" height="637"><path d="M1041.3 131.0 L1051.3 141.0 M1041.3 134.0 L1048.3 141.0 M1041.3 137.0 L1045.3 141.0 " stroke="#303030" stroke-width="1.2" fill="none" transform="translate(-0.9,0.9)"/><path d="M1041.3 131.0 L1051.3 141.0 M1041.3 134.0 L1048.3 141.0 M1041.3 137.0 L1045.3 141.0 " stroke="#b2b2b2" stroke-width="1" fill="none"/></svg>
<!-- properties -->
<div class="a " style="left:1041px;top:142.5px;width:159px;height:494.5px;background:#727272"></div><div class="a " style="left:1041px;top:142.5px;width:159px;height:22px;background:#696969"></div><div class="a " style="left:1041px;top:164.2px;width:159px;height:1px;background:#4e4e4e"></div><div class="a w menu" style="left:1049px;top:145px;width:28px;height:17px;border-radius:3.5px;"></div><svg class="a" style="left:1052px;top:146.4px" width="15" height="15" viewBox="0 0 15 15"><rect x="1.2" y="2" width="12.4" height="4.4" rx="2.2" fill="#3c3c3c" stroke="#d8d8d8" stroke-width=".8"/><rect x="8" y="2.6" width="5" height="3.2" rx="1.6" fill="#f4f4f4"/><rect x="3" y="3.7" width="4.4" height="1" fill="#aaa"/><rect x="1.2" y="8.6" width="12.4" height="4.6" rx="2.3" fill="#f6f6f6" stroke="#222" stroke-width=".8"/><rect x="4.4" y="9.8" width="6" height="2.2" fill="#777"/><path d="M2.4 10.9 L4 9.7 V12.1Z M12.4 10.9 L10.8 9.7 V12.1Z" fill="#111"/></svg><svg class="a" style="left:0;top:0" width="1200" height="637"><polygon points="1068.8,152.6 1073.8,152.6 1071.3,148.0" fill="#b4b4b4"/><polygon points="1068.8,154.6 1073.8,154.6 1071.3,159.2" fill="#b4b4b4"/></svg><div class="a w sel" style="left:1085px;top:145px;width:18px;height:17px;border-radius:3.5px 0 0 3.5px;border-color:#22355c"></div><div style="opacity:1"><svg class="a" style="left:1087.3999999999999px;top:147.2px" width="13" height="13" viewBox="0 0 15 15"><path d="M2.2 4.8 L4 2.6 H6 L7.2 4.8Z" fill="#e8e8e8" stroke="#1a1a1a" stroke-width=".7"/><rect x="1" y="4.6" width="12.8" height="8.8" rx=".8" fill="#d2d2d2" stroke="#1a1a1a" stroke-width=".9"/><rect x="1.6" y="6.4" width="11.6" height="5.2" fill="#3a3a3a"/><rect x="1.6" y="11.6" width="11.6" height="1.2" fill="#efefef"/><circle cx="3.6" cy="5.5" r=".8" fill="#f03030"/><circle cx="8.4" cy="9.4" r="3.2" fill="#e4e4e4" stroke="#1a1a1a" stroke-width=".8"/><circle cx="8.4" cy="9.4" r="2" fill="#3a5a90"/><path d="M8.4 9.4 L10.2 10.4 A2 2 0 0 1 7.4 11.1Z" fill="#d83030"/></svg></div><div class="a w" style="left:1102px;top:145px;width:18px;height:17px;border-radius:0;background:linear-gradient(#626262,#525252);border-color:#333"></div><div style="opacity:0.74"><svg class="a" style="left:1104.3999999999999px;top:147.2px" width="13" height="13" viewBox="0 0 15 15"><rect x="5" y="4.6" width="8.6" height="8.6" fill="#d8d0b8" stroke="#333" stroke-width=".8" transform="rotate(8 9 9)"/><rect x="3" y="3" width="8.6" height="8.6" fill="#e8e8e8" stroke="#333" stroke-width=".8" transform="rotate(4 7 7)"/><rect x="1.2" y="1.2" width="8.8" height="8.8" fill="#f8f8f8" stroke="#222" stroke-width=".8"/><rect x="5.4" y="2.4" width="2.6" height="4.4" rx="1" fill="#3a6ad0"/><circle cx="4.4" cy="7" r="1.7" fill="#bbb" stroke="#444" stroke-width=".5"/><circle cx="3" cy="3" r=".9" fill="#f0d020"/></svg></div><div class="a w" style="left:1119px;top:145px;width:19px;height:17px;border-radius:0;background:linear-gradient(#626262,#525252);border-color:#333"></div><div style="opacity:0.74"><svg class="a" style="left:1122.3px;top:147.39999999999998px" width="12.6" height="12.6" viewBox="0 0 13 13"><defs><linearGradient id="scy" x1="0" x2="1"><stop offset="0" stop-color="#9cc4ff"/><stop offset=".45" stop-color="#3f74d4"/><stop offset="1" stop-color="#1f468f"/></linearGradient><radialGradient id="scs" cx=".35" cy=".3" r=".8"><stop offset="0" stop-color="#fff"/><stop offset=".7" stop-color="#d8d8d8"/><stop offset="1" stop-color="#8a8a8a"/></radialGradient></defs><circle cx="2.4" cy="2.4" r="2.3" fill="#f4ec70" opacity=".35"/><circle cx="2.4" cy="2.4" r="1.2" fill="#f6f08a"/><rect x="6.4" y=".9" width="5.8" height="10" rx="2.4" fill="url(#scy)" stroke="#1a2a52" stroke-width=".7"/><ellipse cx="9.3" cy="2.5" rx="2.3" ry="1.2" fill="#c8dcff" opacity=".8"/><circle cx="4.8" cy="9.4" r="3.2" fill="url(#scs)" stroke="#262626" stroke-width=".8"/></svg></div><div class="a w" style="left:1137px;top:145px;width:18px;height:17px;border-radius:0;background:linear-gradient(#626262,#525252);border-color:#333"></div><div style="opacity:0.74"><svg class="a" style="left:1139.3999999999999px;top:147.2px" width="13" height="13" viewBox="0 0 15 15"><circle cx="7.5" cy="7.5" r="6.9" fill="#c9cce2" stroke="#4c4c68" stroke-width=".7"/><circle cx="7.5" cy="7.5" r="5.4" fill="#3f6fb6" stroke="#2a3c66" stroke-width=".6"/><path d="M3.4 5 C4.6 3.2 6.4 3.4 7 4.4 C7.6 5.6 6.4 6 6.2 7.2 C6 8.6 4.8 8.4 4.4 7.4 C4 6.6 2.8 6.2 3.4 5Z M8.2 6.6 C9.4 5.6 11.2 6.2 11.6 7.6 C11.8 9.2 10.8 11 9.6 11.4 C8.6 11.6 8.8 10 8.2 9.2 C7.6 8.2 7.4 7.2 8.2 6.6Z M7 10.6 C7.6 10.6 7.8 11.8 7.2 12.2 C6.6 12.2 6.4 11 7 10.6Z" fill="#4d8c36"/><ellipse cx="5.8" cy="4.4" rx="2.6" ry="1.3" fill="#fff" opacity=".35"/></svg></div><div class="a w" style="left:1154px;top:145px;width:19px;height:17px;border-radius:0;background:linear-gradient(#626262,#525252);border-color:#333"></div><div style="opacity:0.74"><svg class="a" style="left:1157.2px;top:147.6px" width="12.2" height="12.2" viewBox="0 0 14 14"><path d="M7 1 L12.6 3.4 V10.2 L7 13.2 L1.4 10.2 V3.4Z" fill="#e0903a" stroke="#5a3208" stroke-width=".8" stroke-linejoin="round"/><path d="M7 1 L12.6 3.4 L7 6 L1.4 3.4Z" fill="#fbe3c0"/><path d="M7 6 V13.2 L12.6 10.2 V3.4Z" fill="#c07020"/><path d="M1.4 3.4 L7 6 V13.2 L1.4 10.2Z" fill="#eca85a"/><path d="M1.4 3.4 L7 6 L12.6 3.4 M7 6V13.2" stroke="#8a5418" stroke-width=".5" fill="none"/></svg></div><div class="a w" style="left:1172px;top:145px;width:18px;height:17px;border-radius:0;background:linear-gradient(#626262,#525252);border-color:#333"></div><div style="opacity:0.74"><svg class="a" style="left:1174.1999999999998px;top:147.2px" width="13.4" height="13.4" viewBox="0 0 15 15"><rect x="1" y="6.6" width="7.6" height="4.6" rx="2.3" fill="none" stroke="#d8d8d8" stroke-width="1.6" transform="rotate(-35 5 9)"/><rect x="6.4" y="3.6" width="7.6" height="4.6" rx="2.3" fill="none" stroke="#d8d8d8" stroke-width="1.6" transform="rotate(-35 10 6)"/></svg></div><div class="a w" style="left:1189px;top:145px;width:19px;height:17px;border-radius:0;background:linear-gradient(#626262,#525252);border-color:#333"></div><div style="opacity:0.74"><svg class="a" style="left:1191.6px;top:147.2px;opacity:1" width="14" height="14" viewBox="0 0 14 14"><path d="M1.3 11.2 L7.6 4.9 C7.2 3.3 7.9 1.8 9.5 1 L10.6 0.8 L8.9 2.9 L9.6 4.4 L11.2 5 L13 3.1 C13.3 4.6 12.6 6.3 11 6.9 C10.2 7.2 9.6 7.1 9 6.9 L2.8 12.8 C1.8 13.6 0.4 12.2 1.3 11.2Z" fill="#8fb0de" stroke="#33466a" stroke-width=".8"/></svg></div><svg class="a" style="left:1049px;top:173.6px" width="15" height="15" viewBox="0 0 15 15"><path d="M.9 13.6 L5 9.4" stroke="#262626" stroke-width="2.6" stroke-linecap="round"/><path d="M.9 13.6 L5 9.4" stroke="#f0f0f0" stroke-width="1.2" stroke-linecap="round"/><polygon points="5.33,6.38 8.09,2.92 11.48,6.31 8.02,9.07" fill="#ececec" stroke="#262626" stroke-width=".9" stroke-linejoin="round"/><polygon points="2.71,6.31 3.99,5.04 9.36,10.41 8.09,11.69" fill="#ececec" stroke="#262626" stroke-width=".9" stroke-linejoin="round"/><polygon points="7.10,1.93 8.79,0.23 14.17,5.61 12.47,7.30" fill="#ececec" stroke="#262626" stroke-width=".9" stroke-linejoin="round"/></svg><svg class="a" style="left:1068.4px;top:174.2px" width="13" height="13" viewBox="0 0 13 13"><defs><linearGradient id="scy" x1="0" x2="1"><stop offset="0" stop-color="#9cc4ff"/><stop offset=".45" stop-color="#3f74d4"/><stop offset="1" stop-color="#1f468f"/></linearGradient><radialGradient id="scs" cx=".35" cy=".3" r=".8"><stop offset="0" stop-color="#fff"/><stop offset=".7" stop-color="#d8d8d8"/><stop offset="1" stop-color="#8a8a8a"/></radialGradient></defs><circle cx="2.4" cy="2.4" r="2.3" fill="#f4ec70" opacity=".35"/><circle cx="2.4" cy="2.4" r="1.2" fill="#f6f08a"/><rect x="6.4" y=".9" width="5.8" height="10" rx="2.4" fill="url(#scy)" stroke="#1a2a52" stroke-width=".7"/><ellipse cx="9.3" cy="2.5" rx="2.3" ry="1.2" fill="#c8dcff" opacity=".8"/><circle cx="4.8" cy="9.4" r="3.2" fill="url(#scs)" stroke="#262626" stroke-width=".8"/></svg><div class="t " style="left:1087px;top:175.8px;">Scene</div><div class="a " style="left:1045.5px;top:196.2px;width:135.5px;height:1px;background:#5e5e5e"></div><div class="a " style="left:1045.5px;top:197.2px;width:135.5px;height:1px;background:#7c7c7c"></div><svg class="a" style="left:0;top:0" width="1200" height="637"><polygon points="1052.4,203.8 1059.6,203.8 1056,210.6" fill="#2a2a2a"/></svg><div class="t hd" style="left:1063.2px;top:200.6px;">Визуализация</div><svg class="a" style="left:0;top:0" width="1200" height="637"><rect x="1166.0" y="206.1" width="1.3" height="1.3" fill="#9a9a9a"/><rect x="1166.6" y="206.8" width="1" height="1" fill="#555" opacity=".55"/><rect x="1166.0" y="208.9" width="1.3" height="1.3" fill="#9a9a9a"/><rect x="1166.6" y="209.6" width="1" height="1" fill="#555" opacity=".55"/><rect x="1168.6" y="206.1" width="1.3" height="1.3" fill="#9a9a9a"/><rect x="1169.2" y="206.8" width="1" height="1" fill="#555" opacity=".55"/><rect x="1168.6" y="208.9" width="1.3" height="1.3" fill="#9a9a9a"/><rect x="1169.2" y="209.6" width="1" height="1" fill="#555" opacity=".55"/><rect x="1171.2" y="206.1" width="1.3" height="1.3" fill="#9a9a9a"/><rect x="1171.8" y="206.8" width="1" height="1" fill="#555" opacity=".55"/><rect x="1171.2" y="208.9" width="1.3" height="1.3" fill="#9a9a9a"/><rect x="1171.8" y="209.6" width="1" height="1" fill="#555" opacity=".55"/><rect x="1173.8" y="206.1" width="1.3" height="1.3" fill="#9a9a9a"/><rect x="1174.4" y="206.8" width="1" height="1" fill="#555" opacity=".55"/><rect x="1173.8" y="208.9" width="1.3" height="1.3" fill="#9a9a9a"/><rect x="1174.4" y="209.6" width="1" height="1" fill="#555" opacity=".55"/></svg><div class="a w tool" style="left:1049px;top:225px;width:42px;height:17px;border-radius:3.5px 0 0 3.5px;"></div><div class="a" style="left:1048.8px;top:225.4px;width:40.000000000000135px;height:16.8px;overflow:hidden"><svg class="a" style="left:2px;top:1px" width="15" height="15" viewBox="0 0 15 15"><path d="M2.2 4.8 L4 2.6 H6 L7.2 4.8Z" fill="#e8e8e8" stroke="#1a1a1a" stroke-width=".7"/><rect x="1" y="4.6" width="12.8" height="8.8" rx=".8" fill="#d2d2d2" stroke="#1a1a1a" stroke-width=".9"/><rect x="1.6" y="6.4" width="11.6" height="5.2" fill="#3a3a3a"/><rect x="1.6" y="11.6" width="11.6" height="1.2" fill="#efefef"/><circle cx="3.6" cy="5.5" r=".8" fill="#f03030"/><circle cx="8.4" cy="9.4" r="3.2" fill="#e4e4e4" stroke="#1a1a1a" stroke-width=".8"/><circle cx="8.4" cy="9.4" r="2" fill="#3a5a90"/><path d="M8.4 9.4 L10.2 10.4 A2 2 0 0 1 7.4 11.1Z" fill="#d83030"/><path d="M12.2 .2 L13.1 2.4 L15.2 3 L13.1 3.8 L12.2 6 L11.3 3.8 L9.2 3 L11.3 2.4Z" fill="#ffe95a" stroke="#b89a18" stroke-width=".3"/></svg><div class="t" style="left:15.5px;top:3.3000000000000007px">Визуализация</div></div><div class="a w tool" style="left:1090px;top:225px;width:45px;height:17px;border-radius:0;"></div><div class="a" style="left:1090.4px;top:225.4px;width:41.59999999999982px;height:16.8px;overflow:hidden"><svg class="a" style="left:3.4px;top:1px" width="15" height="15" viewBox="0 0 15 15"><rect x="1.4" y="6.6" width="12.4" height="7.2" fill="#2a2a2a" stroke="#0a0a0a" stroke-width=".8"/><rect x="2.6" y="9.6" width="10" height="1" fill="#ddd"/><rect x="2.6" y="11.6" width="10" height="1" fill="#bbb"/><path d="M1 5.8 L13 1.2 L13.8 3.4 L1.8 8Z" fill="#f2f2f2" stroke="#0a0a0a" stroke-width=".8"/><path d="M3.4 5 L5 7 M6.4 3.8 L8 5.8 M9.4 2.6 L11 4.6" stroke="#111" stroke-width="1.6"/></svg><div class="t" style="left:16.799999999999955px;top:3.3000000000000007px">Анимация</div></div><div class="a w tool" style="left:1134px;top:225px;width:44px;height:17px;border-radius:0 3.5px 3.5px 0;"></div><div class="a" style="left:1133.6px;top:225.4px;width:44.20000000000018px;height:16.8px;overflow:hidden"><svg class="a" style="left:2.8px;top:1px" width="15" height="15" viewBox="0 0 15 15"><path d="M1.4 5.4 H3.8 L7 2.4 V12.6 L3.8 9.6 H1.4Z" fill="#e4e4e4" stroke="#222" stroke-width=".8" stroke-linejoin="round"/><path d="M9 4.6 C10.4 6.2 10.4 8.8 9 10.4 M11 3 C13.2 5.6 13.2 9.4 11 12" stroke="#5a8ae0" stroke-width="1.3" fill="none"/></svg><div class="t" style="left:16.100000000000136px;top:3.3000000000000007px">Аудио</div></div><div class="t " style="left:1054.5px;top:249.9px;">Отобра</div><div class="a w menu" style="left:1096px;top:247px;width:64px;height:17px;border-radius:3.5px 0 0 3.5px;"></div><div class="t wh" style="left:1102.4px;top:249.7px;">Редакто…</div><svg class="a" style="left:0;top:0" width="1200" height="637"><polygon points="1151.5,254.7 1156.5,254.7 1154,250.1" fill="#b4b4b4"/><polygon points="1151.5,256.7 1156.5,256.7 1154,261.3" fill="#b4b4b4"/></svg><div class="a w" style="left:1159px;top:247px;width:19px;height:17px;border-radius:0 3.5px 3.5px 0;background:linear-gradient(#959595,#848484)"></div><svg class="a" style="left:1161.6px;top:248.6px" width="14" height="14" viewBox="0 0 14 14"><path d="M2.2 4.2 C2.2 0.6 7.4 0.6 7.4 4.2 V7.4" fill="none" stroke="#2a2a2a" stroke-width="2.6"/><path d="M2.2 4.2 C2.2 0.6 7.4 0.6 7.4 4.2 V7.4" fill="none" stroke="#f2f2f2" stroke-width="1.2"/><rect x="4.4" y="6.6" width="8.8" height="6.4" fill="#f4f4f4" stroke="#2a2a2a" stroke-width="1"/><rect x="6" y="9" width="5.4" height="1.8" fill="#9a9a9a"/><rect x="9" y="9" width="1.2" height="1.8" fill="#333"/></svg><div class="a " style="left:1045.5px;top:270.5px;width:135.5px;height:1px;background:#5e5e5e"></div><div class="a " style="left:1045.5px;top:271.5px;width:135.5px;height:1px;background:#7c7c7c"></div><svg class="a" style="left:0;top:0" width="1200" height="637"><polygon points="1052.4,278.6 1059.6,278.6 1056,285.40000000000003" fill="#2a2a2a"/></svg><div class="t hd" style="left:1063.2px;top:275.4px;">Размеры</div><svg class="a" style="left:0;top:0" width="1200" height="637"><rect x="1166.0" y="280.9" width="1.3" height="1.3" fill="#9a9a9a"/><rect x="1166.6" y="281.6" width="1" height="1" fill="#555" opacity=".55"/><rect x="1166.0" y="283.7" width="1.3" height="1.3" fill="#9a9a9a"/><rect x="1166.6" y="284.4" width="1" height="1" fill="#555" opacity=".55"/><rect x="1168.6" y="280.9" width="1.3" height="1.3" fill="#9a9a9a"/><rect x="1169.2" y="281.6" width="1" height="1" fill="#555" opacity=".55"/><rect x="1168.6" y="283.7" width="1.3" height="1.3" fill="#9a9a9a"/><rect x="1169.2" y="284.4" width="1" height="1" fill="#555" opacity=".55"/><rect x="1171.2" y="280.9" width="1.3" height="1.3" fill="#9a9a9a"/><rect x="1171.8" y="281.6" width="1" height="1" fill="#555" opacity=".55"/><rect x="1171.2" y="283.7" width="1.3" height="1.3" fill="#9a9a9a"/><rect x="1171.8" y="284.4" width="1" height="1" fill="#555" opacity=".55"/><rect x="1173.8" y="280.9" width="1.3" height="1.3" fill="#9a9a9a"/><rect x="1174.4" y="281.6" width="1" height="1" fill="#555" opacity=".55"/><rect x="1173.8" y="283.7" width="1.3" height="1.3" fill="#9a9a9a"/><rect x="1174.4" y="284.4" width="1" height="1" fill="#555" opacity=".55"/></svg><div class="a w menu" style="left:1048px;top:300px;width:95px;height:17px;border-radius:3.5px 0 0 3.5px;"></div><div class="t wh" style="left:1054.5px;top:302.3px;">Предус…изации</div><svg class="a" style="left:0;top:0" width="1200" height="637"><polygon points="1135.1,307.5 1140.1,307.5 1137.6,302.9" fill="#b4b4b4"/><polygon points="1135.1,309.5 1140.1,309.5 1137.6,314.1" fill="#b4b4b4"/></svg><div class="a w tool" style="left:1142px;top:300px;width:18px;height:17px;border-radius:0"></div><svg class="a" style="left:1145.4px;top:302.6px" width="12" height="12" viewBox="0 0 12 12"><path d="M6 .8V11.2M.8 6H11.2" stroke="#2a2a2a" stroke-width="3.9"/><path d="M6 1.6V10.4M1.6 6H10.4" stroke="#f0f0f0" stroke-width="2.2"/></svg><div class="a w tool" style="left:1159px;top:300px;width:19px;height:17px;border-radius:0 3.5px 3.5px 0;"></div><svg class="a" style="left:1162.6px;top:302.6px" width="12" height="12" viewBox="0 0 12 12"><path d="M.8 6H11.2" stroke="#2a2a2a" stroke-width="3.9"/><path d="M1.6 6H10.4" stroke="#f0f0f0" stroke-width="2.2"/></svg><div class="t " style="left:1054.5px;top:325.1px;">Разрешен…</div><div class="t " style="left:1124.2px;top:325.1px;">Диапазон…</div><div class="a w num" style="left:1048px;top:340px;width:61px;height:17px;border-radius:8px 8px 0 0;"></div><svg class="a" style="left:0;top:0" width="1200" height="637"><polygon points="1057.0,345.84999999999997 1057.0,351.05 1053.6000000000001,348.45" fill="#6a6a6a"/><polygon points="1100.8000000000002,345.84999999999997 1100.8000000000002,351.05 1104.2,348.45" fill="#6a6a6a"/></svg><div class="t c" style="left:1048.4px;width:61px;top:343.15px;">1920 p</div><div class="a w num" style="left:1048px;top:356px;width:61px;height:19px;border-radius:0;"></div><svg class="a" style="left:0;top:0" width="1200" height="637"><polygon points="1057.0,362.94999999999993 1057.0,368.15 1053.6000000000001,365.54999999999995" fill="#6a6a6a"/><polygon points="1100.8000000000002,362.94999999999993 1100.8000000000002,368.15 1104.2,365.54999999999995" fill="#6a6a6a"/></svg><div class="t c" style="left:1048.4px;width:61px;top:360.25px;">1080 p</div><div class="a w" style="left:1048px;top:374px;width:61px;height:17px;border-radius:0 0 8px 8px;background:linear-gradient(90deg,#6e6e6e 0,#787878 52%,#a6a6a6 52%,#b2b2b2 100%)"></div><div class="t c" style="left:1054.7px;width:61px;top:377.05px">50%</div><div class="a w num" style="left:1116px;top:340px;width:62px;height:17px;border-radius:8px 8px 0 0;"></div><svg class="a" style="left:0;top:0" width="1200" height="637"><polygon points="1125.0,345.84999999999997 1125.0,351.05 1121.6000000000001,348.45" fill="#6a6a6a"/><polygon points="1169.2000000000003,345.84999999999997 1169.2000000000003,351.05 1172.6000000000001,348.45" fill="#6a6a6a"/></svg><div class="t c" style="left:1116.4px;width:61.4px;top:343.15px;">Нач. : 1</div><div class="a w num" style="left:1116px;top:356px;width:62px;height:19px;border-radius:0;"></div><svg class="a" style="left:0;top:0" width="1200" height="637"><polygon points="1125.0,362.94999999999993 1125.0,368.15 1121.6000000000001,365.54999999999995" fill="#6a6a6a"/><polygon points="1169.2000000000003,362.94999999999993 1169.2000000000003,368.15 1172.6000000000001,365.54999999999995" fill="#6a6a6a"/></svg><div class="t c" style="left:1116.4px;width:61.4px;top:360.25px;">Ко:250</div><div class="a w num" style="left:1116px;top:374px;width:62px;height:17px;border-radius:0 0 8px 8px;"></div><svg class="a" style="left:0;top:0" width="1200" height="637"><polygon points="1125.0,379.75 1125.0,384.95000000000005 1121.6000000000001,382.35" fill="#6a6a6a"/><polygon points="1169.2000000000003,379.75 1169.2000000000003,384.95000000000005 1172.6000000000001,382.35" fill="#6a6a6a"/></svg><div class="t c" style="left:1116.4px;width:61.4px;top:377.05px;">Шаг : 1</div><div class="t " style="left:1054.5px;top:395.4px;">Соотн. сто…</div><div class="t " style="left:1124.2px;top:395.4px;">Частота к…</div><div class="a w num" style="left:1048px;top:410px;width:61px;height:17px;border-radius:8px 8px 0 0;"></div><svg class="a" style="left:0;top:0" width="1200" height="637"><polygon points="1057.0,415.7 1057.0,420.90000000000003 1053.6000000000001,418.3" fill="#6a6a6a"/><polygon points="1100.8000000000002,415.7 1100.8000000000002,420.90000000000003 1104.2,418.3" fill="#6a6a6a"/></svg><div class="t c" style="left:1048.4px;width:61px;top:413px;">: 1.000</div><div class="a w num" style="left:1048px;top:426px;width:61px;height:18px;border-radius:0 0 8px 8px;"></div><svg class="a" style="left:0;top:0" width="1200" height="637"><polygon points="1057.0,432.2 1057.0,437.40000000000003 1053.6000000000001,434.8" fill="#6a6a6a"/><polygon points="1100.8000000000002,432.2 1100.8000000000002,437.40000000000003 1104.2,434.8" fill="#6a6a6a"/></svg><div class="t c" style="left:1048.4px;width:61px;top:429.5px;">: 1.000</div><div class="a w menu" style="left:1116px;top:410px;width:62px;height:17px;border-radius:3.5px;"></div><div class="t wh" style="left:1123.7px;top:413px;">24 fps</div><svg class="a" style="left:0;top:0" width="1200" height="637"><polygon points="1169.7000000000003,417.3 1174.7000000000003,417.3 1172.2000000000003,412.7" fill="#b4b4b4"/><polygon points="1169.7000000000003,419.3 1174.7000000000003,419.3 1172.2000000000003,423.90000000000003" fill="#b4b4b4"/></svg><div class="t " style="left:1124.2px;top:430.2px;">Перерасп.</div><div class="a w menu" style="left:1051px;top:449px;width:12px;height:12px;border-radius:3px;"></div><div class="a w" style="left:1085px;top:449px;width:12px;height:12px;border-radius:3px;background:linear-gradient(#5e5e5e,#525252);border-color:#4a4a4a"></div><div class="a w num" style="left:1116px;top:445px;width:31px;height:16px;border-radius:8px 0 0 8px;"></div><svg class="a" style="left:0;top:0" width="1200" height="637"><polygon points="1125.0,450.7 1125.0,455.90000000000003 1121.6000000000001,453.3" fill="#6a6a6a"/><polygon points="1138.8000000000002,450.7 1138.8000000000002,455.90000000000003 1142.2,453.3" fill="#6a6a6a"/></svg><div class="t c" style="left:1116.4px;width:31px;top:448px;"></div><div class="a w num" style="left:1146px;top:445px;width:32px;height:16px;border-radius:0 8px 8px 0;"></div><svg class="a" style="left:0;top:0" width="1200" height="637"><polygon points="1155.0,450.7 1155.0,455.90000000000003 1151.6000000000001,453.3" fill="#6a6a6a"/><polygon points="1169.2000000000003,450.7 1169.2000000000003,455.90000000000003 1172.6000000000001,453.3" fill="#6a6a6a"/></svg><div class="t c" style="left:1146.4px;width:31.4px;top:448px;"></div><div class="t" style="left:1158.6px;top:446.90000000000003px">1</div><div class="a " style="left:1045.5px;top:470.2px;width:135.5px;height:1px;background:#5e5e5e"></div><div class="a " style="left:1045.5px;top:471.2px;width:135.5px;height:1px;background:#7c7c7c"></div><svg class="a" style="left:0;top:0" width="1200" height="637"><polygon points="1052.4,478.2 1059.6,478.2 1056,485.0" fill="#2a2a2a"/></svg><div class="a w menu" style="left:1063px;top:476px;width:12px;height:12px;border-radius:3px;"></div><svg class="a" style="left:1063.4px;top:474px" width="14.8" height="13.8" viewBox="0 0 14 13"><path d="M3.2 6.6 L6 10.4 L12.4 1.6" stroke="#222" stroke-width="2.6" fill="none" opacity=".5"/><path d="M3.2 6.6 L6 10.4 L12.4 1.6" stroke="#f4f4f4" stroke-width="1.5" fill="none"/></svg><div class="t hd" style="left:1080.8px;top:475px;">Сглаживание</div><svg class="a" style="left:0;top:0" width="1200" height="637"><rect x="1166.0" y="480.5" width="1.3" height="1.3" fill="#9a9a9a"/><rect x="1166.6" y="481.2" width="1" height="1" fill="#555" opacity=".55"/><rect x="1166.0" y="483.3" width="1.3" height="1.3" fill="#9a9a9a"/><rect x="1166.6" y="484.0" width="1" height="1" fill="#555" opacity=".55"/><rect x="1168.6" y="480.5" width="1.3" height="1.3" fill="#9a9a9a"/><rect x="1169.2" y="481.2" width="1" height="1" fill="#555" opacity=".55"/><rect x="1168.6" y="483.3" width="1.3" height="1.3" fill="#9a9a9a"/><rect x="1169.2" y="484.0" width="1" height="1" fill="#555" opacity=".55"/><rect x="1171.2" y="480.5" width="1.3" height="1.3" fill="#9a9a9a"/><rect x="1171.8" y="481.2" width="1" height="1" fill="#555" opacity=".55"/><rect x="1171.2" y="483.3" width="1.3" height="1.3" fill="#9a9a9a"/><rect x="1171.8" y="484.0" width="1" height="1" fill="#555" opacity=".55"/><rect x="1173.8" y="480.5" width="1.3" height="1.3" fill="#9a9a9a"/><rect x="1174.4" y="481.2" width="1" height="1" fill="#555" opacity=".55"/><rect x="1173.8" y="483.3" width="1.3" height="1.3" fill="#9a9a9a"/><rect x="1174.4" y="484.0" width="1" height="1" fill="#555" opacity=".55"/></svg><div class="a w radio" style="left:1048px;top:499px;width:16px;height:17px;border-radius:3.5px 0 0 3.5px;"></div><div class="t c wh" style="left:1048.4px;width:15.5px;top:502.6px;">5</div><div class="a w sel" style="left:1063px;top:499px;width:16px;height:17px;border-radius:0;"></div><div class="t c wh" style="left:1062.9px;width:16.5px;top:502.6px;color:#0a0a0a">8</div><div class="a w radio" style="left:1078px;top:499px;width:17px;height:17px;border-radius:0;"></div><div class="t c wh" style="left:1078.4px;width:16.3px;top:502.6px;">11</div><div class="a w radio" style="left:1094px;top:499px;width:15px;height:17px;border-radius:0 3.5px 3.5px 0;"></div><div class="t c wh" style="left:1093.7px;width:15.6px;top:502.6px;">16</div><div class="a w menu" style="left:1116px;top:499px;width:62px;height:17px;border-radius:3.5px;"></div><div class="t wh" style="left:1123.4px;top:502.6px;">Митчелл-</div><svg class="a" style="left:0;top:0" width="1200" height="637"><polygon points="1169.7000000000003,506.9 1174.7000000000003,506.9 1172.2000000000003,502.29999999999995" fill="#b4b4b4"/><polygon points="1169.7000000000003,508.9 1174.7000000000003,508.9 1172.2000000000003,513.5" fill="#b4b4b4"/></svg><div class="a w menu" style="left:1051px;top:522px;width:12px;height:11px;border-radius:3px;"></div><div class="t " style="left:1070.6px;top:521.6px;">Все сэм</div><div class="a w num" style="left:1116px;top:519px;width:62px;height:16px;border-radius:8px;"></div><svg class="a" style="left:0;top:0" width="1200" height="637"><polygon points="1125.0,524.6 1125.0,529.8000000000001 1121.6000000000001,527.2" fill="#6a6a6a"/><polygon points="1169.2000000000003,524.6 1169.2000000000003,529.8000000000001 1172.6000000000001,527.2" fill="#6a6a6a"/></svg><div class="t c" style="left:1116.4px;width:61.4px;top:521.9px;">1.000 p</div><div class="a " style="left:1045.5px;top:542.5px;width:135.5px;height:1px;background:#5e5e5e"></div><div class="a " style="left:1045.5px;top:543.5px;width:135.5px;height:1px;background:#7c7c7c"></div><svg class="a" style="left:0;top:0" width="1200" height="637"><polygon points="1052.8,549.6999999999999 1052.8,557.1 1059.6,553.4" fill="#2a2a2a"/></svg><div class="a w menu" style="left:1063px;top:548px;width:12px;height:11px;border-radius:3px"></div><div class="a" style="left:1080.8px;top:545.4px;width:100.5px;height:16px;overflow:hidden"><div class="t hd" style="left:0px;top:1.6px;">Размытие при движении</div></div><svg class="a" style="left:0;top:0" width="1200" height="637"><rect x="1166.0" y="552.5" width="1.3" height="1.3" fill="#9a9a9a"/><rect x="1166.6" y="553.2" width="1" height="1" fill="#555" opacity=".55"/><rect x="1166.0" y="555.3" width="1.3" height="1.3" fill="#9a9a9a"/><rect x="1166.6" y="556.0" width="1" height="1" fill="#555" opacity=".55"/><rect x="1168.6" y="552.5" width="1.3" height="1.3" fill="#9a9a9a"/><rect x="1169.2" y="553.2" width="1" height="1" fill="#555" opacity=".55"/><rect x="1168.6" y="555.3" width="1.3" height="1.3" fill="#9a9a9a"/><rect x="1169.2" y="556.0" width="1" height="1" fill="#555" opacity=".55"/><rect x="1171.2" y="552.5" width="1.3" height="1.3" fill="#9a9a9a"/><rect x="1171.8" y="553.2" width="1" height="1" fill="#555" opacity=".55"/><rect x="1171.2" y="555.3" width="1.3" height="1.3" fill="#9a9a9a"/><rect x="1171.8" y="556.0" width="1" height="1" fill="#555" opacity=".55"/><rect x="1173.8" y="552.5" width="1.3" height="1.3" fill="#9a9a9a"/><rect x="1174.4" y="553.2" width="1" height="1" fill="#555" opacity=".55"/><rect x="1173.8" y="555.3" width="1.3" height="1.3" fill="#9a9a9a"/><rect x="1174.4" y="556.0" width="1" height="1" fill="#555" opacity=".55"/></svg><div class="a " style="left:1045.5px;top:563.2px;width:135.5px;height:1px;background:#5e5e5e"></div><div class="a " style="left:1045.5px;top:564.2px;width:135.5px;height:1px;background:#7c7c7c"></div><svg class="a" style="left:0;top:0" width="1200" height="637"><polygon points="1052.8,570.8 1052.8,578.2 1059.6,574.5" fill="#2a2a2a"/></svg><div class="t hd" style="left:1063.2px;top:568.1px;">Затенение</div><svg class="a" style="left:0;top:0" width="1200" height="637"><rect x="1166.0" y="573.6" width="1.3" height="1.3" fill="#9a9a9a"/><rect x="1166.6" y="574.3" width="1" height="1" fill="#555" opacity=".55"/><rect x="1166.0" y="576.4" width="1.3" height="1.3" fill="#9a9a9a"/><rect x="1166.6" y="577.1" width="1" height="1" fill="#555" opacity=".55"/><rect x="1168.6" y="573.6" width="1.3" height="1.3" fill="#9a9a9a"/><rect x="1169.2" y="574.3" width="1" height="1" fill="#555" opacity=".55"/><rect x="1168.6" y="576.4" width="1.3" height="1.3" fill="#9a9a9a"/><rect x="1169.2" y="577.1" width="1" height="1" fill="#555" opacity=".55"/><rect x="1171.2" y="573.6" width="1.3" height="1.3" fill="#9a9a9a"/><rect x="1171.8" y="574.3" width="1" height="1" fill="#555" opacity=".55"/><rect x="1171.2" y="576.4" width="1.3" height="1.3" fill="#9a9a9a"/><rect x="1171.8" y="577.1" width="1" height="1" fill="#555" opacity=".55"/><rect x="1173.8" y="573.6" width="1.3" height="1.3" fill="#9a9a9a"/><rect x="1174.4" y="574.3" width="1" height="1" fill="#555" opacity=".55"/><rect x="1173.8" y="576.4" width="1.3" height="1.3" fill="#9a9a9a"/><rect x="1174.4" y="577.1" width="1" height="1" fill="#555" opacity=".55"/></svg><div class="a " style="left:1045.5px;top:584.3px;width:135.5px;height:1px;background:#5e5e5e"></div><div class="a " style="left:1045.5px;top:585.3px;width:135.5px;height:1px;background:#7c7c7c"></div><svg class="a" style="left:0;top:0" width="1200" height="637"><polygon points="1052.8,591.8 1052.8,599.2 1059.6,595.5" fill="#2a2a2a"/></svg><div class="t hd" style="left:1063.2px;top:589.1px;">Производительность</div><svg class="a" style="left:0;top:0" width="1200" height="637"><rect x="1166.0" y="594.6" width="1.3" height="1.3" fill="#9a9a9a"/><rect x="1166.6" y="595.3" width="1" height="1" fill="#555" opacity=".55"/><rect x="1166.0" y="597.4" width="1.3" height="1.3" fill="#9a9a9a"/><rect x="1166.6" y="598.1" width="1" height="1" fill="#555" opacity=".55"/><rect x="1168.6" y="594.6" width="1.3" height="1.3" fill="#9a9a9a"/><rect x="1169.2" y="595.3" width="1" height="1" fill="#555" opacity=".55"/><rect x="1168.6" y="597.4" width="1.3" height="1.3" fill="#9a9a9a"/><rect x="1169.2" y="598.1" width="1" height="1" fill="#555" opacity=".55"/><rect x="1171.2" y="594.6" width="1.3" height="1.3" fill="#9a9a9a"/><rect x="1171.8" y="595.3" width="1" height="1" fill="#555" opacity=".55"/><rect x="1171.2" y="597.4" width="1.3" height="1.3" fill="#9a9a9a"/><rect x="1171.8" y="598.1" width="1" height="1" fill="#555" opacity=".55"/><rect x="1173.8" y="594.6" width="1.3" height="1.3" fill="#9a9a9a"/><rect x="1174.4" y="595.3" width="1" height="1" fill="#555" opacity=".55"/><rect x="1173.8" y="597.4" width="1.3" height="1.3" fill="#9a9a9a"/><rect x="1174.4" y="598.1" width="1" height="1" fill="#555" opacity=".55"/></svg><div class="a " style="left:1045.5px;top:605.2px;width:135.5px;height:1px;background:#5e5e5e"></div><div class="a " style="left:1045.5px;top:606.2px;width:135.5px;height:1px;background:#7c7c7c"></div><svg class="a" style="left:0;top:0" width="1200" height="637"><polygon points="1052.8,612.6999999999999 1052.8,620.1 1059.6,616.4" fill="#2a2a2a"/></svg><div class="t hd" style="left:1063.2px;top:610px;">Постобработка</div><svg class="a" style="left:0;top:0" width="1200" height="637"><rect x="1166.0" y="615.5" width="1.3" height="1.3" fill="#9a9a9a"/><rect x="1166.6" y="616.2" width="1" height="1" fill="#555" opacity=".55"/><rect x="1166.0" y="618.3" width="1.3" height="1.3" fill="#9a9a9a"/><rect x="1166.6" y="619.0" width="1" height="1" fill="#555" opacity=".55"/><rect x="1168.6" y="615.5" width="1.3" height="1.3" fill="#9a9a9a"/><rect x="1169.2" y="616.2" width="1" height="1" fill="#555" opacity=".55"/><rect x="1168.6" y="618.3" width="1.3" height="1.3" fill="#9a9a9a"/><rect x="1169.2" y="619.0" width="1" height="1" fill="#555" opacity=".55"/><rect x="1171.2" y="615.5" width="1.3" height="1.3" fill="#9a9a9a"/><rect x="1171.8" y="616.2" width="1" height="1" fill="#555" opacity=".55"/><rect x="1171.2" y="618.3" width="1.3" height="1.3" fill="#9a9a9a"/><rect x="1171.8" y="619.0" width="1" height="1" fill="#555" opacity=".55"/><rect x="1173.8" y="615.5" width="1.3" height="1.3" fill="#9a9a9a"/><rect x="1174.4" y="616.2" width="1" height="1" fill="#555" opacity=".55"/><rect x="1173.8" y="618.3" width="1.3" height="1.3" fill="#9a9a9a"/><rect x="1174.4" y="619.0" width="1" height="1" fill="#555" opacity=".55"/></svg><div class="a " style="left:1045.5px;top:626.2px;width:135.5px;height:1px;background:#5e5e5e"></div><div class="a " style="left:1045.5px;top:627.2px;width:135.5px;height:1px;background:#7c7c7c"></div><svg class="a" style="left:0;top:0" width="1200" height="637"><polygon points="1052.8,633.8 1052.8,641.2 1059.6,637.5" fill="#2a2a2a"/></svg><div class="t hd" style="left:1063.2px;top:631.1px;">Метаданные</div><svg class="a" style="left:0;top:0" width="1200" height="637"><rect x="1166.0" y="636.6" width="1.3" height="1.3" fill="#9a9a9a"/><rect x="1166.6" y="637.3" width="1" height="1" fill="#555" opacity=".55"/><rect x="1166.0" y="639.4" width="1.3" height="1.3" fill="#9a9a9a"/><rect x="1166.6" y="640.1" width="1" height="1" fill="#555" opacity=".55"/><rect x="1168.6" y="636.6" width="1.3" height="1.3" fill="#9a9a9a"/><rect x="1169.2" y="637.3" width="1" height="1" fill="#555" opacity=".55"/><rect x="1168.6" y="639.4" width="1.3" height="1.3" fill="#9a9a9a"/><rect x="1169.2" y="640.1" width="1" height="1" fill="#555" opacity=".55"/><rect x="1171.2" y="636.6" width="1.3" height="1.3" fill="#9a9a9a"/><rect x="1171.8" y="637.3" width="1" height="1" fill="#555" opacity=".55"/><rect x="1171.2" y="639.4" width="1.3" height="1.3" fill="#9a9a9a"/><rect x="1171.8" y="640.1" width="1" height="1" fill="#555" opacity=".55"/><rect x="1173.8" y="636.6" width="1.3" height="1.3" fill="#9a9a9a"/><rect x="1174.4" y="637.3" width="1" height="1" fill="#555" opacity=".55"/><rect x="1173.8" y="639.4" width="1.3" height="1.3" fill="#9a9a9a"/><rect x="1174.4" y="640.1" width="1" height="1" fill="#555" opacity=".55"/></svg><div class="a " style="left:1185px;top:169.6px;width:11.5px;height:463.9px;background:linear-gradient(90deg,#575757,#626262);border:1px solid #4c4c4c;border-radius:6px"></div><div class="a " style="left:1185px;top:169.6px;width:11.5px;height:323.9px;background:linear-gradient(90deg,#989898,#7d7d7d);border:1px solid #444;border-radius:6px"></div><svg class="a" style="left:0;top:0" width="1200" height="637"><path d="M1190.0 143.0 L1200.0 153.0 M1193.0 143.0 L1200.0 150.0 M1196.0 143.0 L1200.0 147.0 " stroke="#303030" stroke-width="1.2" fill="none" transform="translate(-0.9,0.9)"/><path d="M1190.0 143.0 L1200.0 153.0 M1193.0 143.0 L1200.0 150.0 M1196.0 143.0 L1200.0 147.0 " stroke="#b2b2b2" stroke-width="1" fill="none"/></svg><svg class="a" style="left:0;top:0" width="1200" height="637"><path d="M1041.3 627.5 L1051.3 637.5 M1041.3 630.5 L1048.3 637.5 M1041.3 633.5 L1045.3 637.5 " stroke="#303030" stroke-width="1.2" fill="none" transform="translate(-0.9,0.9)"/><path d="M1041.3 627.5 L1051.3 637.5 M1041.3 630.5 L1048.3 637.5 M1041.3 633.5 L1045.3 637.5 " stroke="#b2b2b2" stroke-width="1" fill="none"/></svg>
<!-- infoheader -->
<div class="a " style="left:0px;top:20px;width:1200px;height:23.6px;background:#696969;border-top:1px solid #606060;border-bottom:1px solid #1e1e1e"></div><div class="a w menu" style="left:8px;top:24px;width:26px;height:17px;border-radius:3.5px;"></div><svg class="a" style="left:11.6px;top:26.4px" width="12" height="12" viewBox="0 0 14 14"><circle cx="7" cy="7" r="6.2" fill="#3b62b0" stroke="#e8e8e8" stroke-width="1.3"/><circle cx="7" cy="3.9" r="1.1" fill="#fff"/><path d="M5.6 6 H7.9 V10 H8.9 V10.9 H5.4 V10 H6.4 V6.9 H5.6Z" fill="#fff"/></svg><svg class="a" style="left:0;top:0" width="1200" height="637"><polygon points="26.7,31.5 31.7,31.5 29.2,26.9" fill="#b4b4b4"/><polygon points="26.7,33.5 31.7,33.5 29.2,38.1" fill="#b4b4b4"/></svg><div class="t " style="left:46px;top:26.7px;">Файл</div><div class="t " style="left:88px;top:26.7px;">Визуализация</div><div class="t " style="left:172.5px;top:26.7px;">Окно</div><div class="t " style="left:213.5px;top:26.7px;">Справка</div><div class="a w menu" style="left:264px;top:24px;width:28px;height:17px;border-radius:3.5px 0 0 3.5px;"></div><svg class="a" style="left:267.6px;top:25.8px" width="14" height="14" viewBox="0 0 14 14"><rect x="1" y="1" width="5.2" height="5" fill="#f4f4f4" stroke="#333" stroke-width=".6"/><rect x="1" y="7.4" width="5.2" height="5.6" fill="#f4f4f4" stroke="#333" stroke-width=".6"/><rect x="7.6" y="1" width="5.4" height="12" fill="#f4f4f4" stroke="#333" stroke-width=".6"/><rect x="2" y="10.6" width="3" height="1.3" fill="#666"/><rect x="8.6" y="10.6" width="3.2" height="1.3" fill="#666"/></svg><svg class="a" style="left:0;top:0" width="1200" height="637"><polygon points="283.1,31.5 288.1,31.5 285.6,26.9" fill="#b4b4b4"/><polygon points="283.1,33.5 288.1,33.5 285.6,38.1" fill="#b4b4b4"/></svg><div class="a w txtf" style="left:291px;top:24px;width:106px;height:17px;border-radius:0;"></div><div class="t " style="left:298.3px;top:26.7px;">Default</div><div class="a w tool" style="left:396px;top:24px;width:19px;height:17px;border-radius:0;"></div><svg class="a" style="left:399.2px;top:26.599999999999998px" width="12" height="12" viewBox="0 0 12 12"><path d="M6 .8V11.2M.8 6H11.2" stroke="#2a2a2a" stroke-width="3.9"/><path d="M6 1.6V10.4M1.6 6H10.4" stroke="#f0f0f0" stroke-width="2.2"/></svg><div class="a w tool" style="left:414px;top:24px;width:18px;height:17px;border-radius:0 3.5px 3.5px 0;"></div><svg class="a" style="left:416.6px;top:26.5px" width="12" height="12" viewBox="0 0 12 12"><path d="M2.2 2.2L9.8 9.8M9.8 2.2L2.2 9.8" stroke="#2a2a2a" stroke-width="3.2" stroke-linecap="round"/><path d="M2.6 2.6L9.4 9.4M9.4 2.6L2.6 9.4" stroke="#f0f0f0" stroke-width="1.6" stroke-linecap="round"/></svg><div class="a w menu" style="left:436px;top:24px;width:30px;height:17px;border-radius:3.5px 0 0 3.5px;"></div><svg class="a" style="left:441.2px;top:25.8px" width="12.6" height="12.6" viewBox="0 0 13 13"><defs><linearGradient id="scy" x1="0" x2="1"><stop offset="0" stop-color="#9cc4ff"/><stop offset=".45" stop-color="#3f74d4"/><stop offset="1" stop-color="#1f468f"/></linearGradient><radialGradient id="scs" cx=".35" cy=".3" r=".8"><stop offset="0" stop-color="#fff"/><stop offset=".7" stop-color="#d8d8d8"/><stop offset="1" stop-color="#8a8a8a"/></radialGradient></defs><circle cx="2.4" cy="2.4" r="2.3" fill="#f4ec70" opacity=".35"/><circle cx="2.4" cy="2.4" r="1.2" fill="#f6f08a"/><rect x="6.4" y=".9" width="5.8" height="10" rx="2.4" fill="url(#scy)" stroke="#1a2a52" stroke-width=".7"/><ellipse cx="9.3" cy="2.5" rx="2.3" ry="1.2" fill="#c8dcff" opacity=".8"/><circle cx="4.8" cy="9.4" r="3.2" fill="url(#scs)" stroke="#262626" stroke-width=".8"/></svg><svg class="a" style="left:0;top:0" width="1200" height="637"><polygon points="456.5,31.5 461.5,31.5 459,26.9" fill="#b4b4b4"/><polygon points="456.5,33.5 461.5,33.5 459,38.1" fill="#b4b4b4"/></svg><div class="a w txtf" style="left:464px;top:24px;width:106px;height:17px;border-radius:0;"></div><div class="t " style="left:471px;top:26.7px;">Scene</div><div class="a w tool" style="left:570px;top:24px;width:18px;height:17px;border-radius:0;"></div><svg class="a" style="left:572.6px;top:26.599999999999998px" width="12" height="12" viewBox="0 0 12 12"><path d="M6 .8V11.2M.8 6H11.2" stroke="#2a2a2a" stroke-width="3.9"/><path d="M6 1.6V10.4M1.6 6H10.4" stroke="#f0f0f0" stroke-width="2.2"/></svg><div class="a w tool" style="left:587px;top:24px;width:18px;height:17px;border-radius:0 3.5px 3.5px 0;"></div><svg class="a" style="left:590px;top:26.5px" width="12" height="12" viewBox="0 0 12 12"><path d="M2.2 2.2L9.8 9.8M9.8 2.2L2.2 9.8" stroke="#2a2a2a" stroke-width="3.2" stroke-linecap="round"/><path d="M2.6 2.6L9.4 9.4M9.4 2.6L2.6 9.4" stroke="#f0f0f0" stroke-width="1.6" stroke-linecap="round"/></svg><div class="a w menu" style="left:619px;top:24px;width:124px;height:17px;border-radius:3.5px;"></div><div class="t wh" style="left:626.5px;top:27.2px;">Рендер Blender</div><svg class="a" style="left:0;top:0" width="1200" height="637"><polygon points="734.9,31.5 739.9,31.5 737.4,26.9" fill="#b4b4b4"/><polygon points="734.9,33.5 739.9,33.5 737.4,38.1" fill="#b4b4b4"/></svg><svg class="a" style="left:758.5px;top:25px" width="14.5" height="14.5" viewBox="0 0 16 16"><path d="M8.2 2.2 L12.8 5.8 C14.6 7.3 15.2 9.3 14.3 11.2 C13.4 13.2 11.4 14 9.4 14 C7.4 14 5.4 13.2 4.6 11.4 C4.2 10.4 4.3 9.6 4.6 8.9 L1.5 11.2 C0.9 11.6 0.2 10.8 0.9 10.2 L5.6 6.6 L2.4 6.6 C1.5 6.6 1.5 5.4 2.4 5.4 L7.2 5.4 L8.6 4.4 L7.4 3.4 C6.7 2.8 7.5 1.7 8.2 2.2 Z" fill="#ea7600"/><circle cx="9.4" cy="9.3" r="2.9" fill="#fff"/><circle cx="9.4" cy="9.3" r="1.8" fill="#13389a"/></svg><div class="t " style="left:782.5px;top:26.7px;letter-spacing:.017px">v2.79 | Вершин:307 | Граней:6 | Треуг.:8 | Объектов:1/4 | Ламп:0/1 | Пам.:20.40МБ | Окружность.001</div><svg class="a" style="left:0;top:0" width="1200" height="637"><path d="M0.0 33.0 L10.0 43.0 M0.0 36.0 L7.0 43.0 M0.0 39.0 L4.0 43.0 " stroke="#303030" stroke-width="1.2" fill="none" transform="translate(-0.9,0.9)"/><path d="M0.0 33.0 L10.0 43.0 M0.0 36.0 L7.0 43.0 M0.0 39.0 L4.0 43.0 " stroke="#b2b2b2" stroke-width="1" fill="none"/></svg><svg class="a" style="left:0;top:0" width="1200" height="637"><path d="M1190.0 21.0 L1200.0 31.0 M1193.0 21.0 L1200.0 28.0 M1196.0 21.0 L1200.0 25.0 " stroke="#303030" stroke-width="1.2" fill="none" transform="translate(-0.9,0.9)"/><path d="M1190.0 21.0 L1200.0 31.0 M1193.0 21.0 L1200.0 28.0 M1196.0 21.0 L1200.0 25.0 " stroke="#b2b2b2" stroke-width="1" fill="none"/></svg>
<!-- titlebar -->
<div class="a " style="left:0px;top:0px;width:1200px;height:20px;background:#fff"></div><svg class="a" style="left:1.2px;top:1px" width="14.6" height="14.6" viewBox="0 0 16 16"><path d="M8.2 2.2 L12.8 5.8 C14.6 7.3 15.2 9.3 14.3 11.2 C13.4 13.2 11.4 14 9.4 14 C7.4 14 5.4 13.2 4.6 11.4 C4.2 10.4 4.3 9.6 4.6 8.9 L1.5 11.2 C0.9 11.6 0.2 10.8 0.9 10.2 L5.6 6.6 L2.4 6.6 C1.5 6.6 1.5 5.4 2.4 5.4 L7.2 5.4 L8.6 4.4 L7.4 3.4 C6.7 2.8 7.5 1.7 8.2 2.2 Z" fill="#ea7600"/><circle cx="9.4" cy="9.3" r="2.9" fill="#fff"/><circle cx="9.4" cy="9.3" r="1.8" fill="#13389a"/></svg><div class="t" style="left:20.5px;top:3.5px;font-family:'Liberation Sans',sans-serif;font-stretch:normal;font-size:10px;color:#000">Blender</div><svg class="a" style="left:0;top:0" width="1200" height="637"><path d="M1093.5 9.4H1102.5" stroke="#111" stroke-width="1"/><path d="M1133.4 6.6H1140V13H1133.4Z M1135.4 6.4V4.6H1142V11H1140.2" stroke="#111" stroke-width=".9" fill="none"/><path d="M1173.6 4.6L1182.2 13M1182.2 4.6L1173.6 13" stroke="#111" stroke-width="1"/></svg>
</body></html>
